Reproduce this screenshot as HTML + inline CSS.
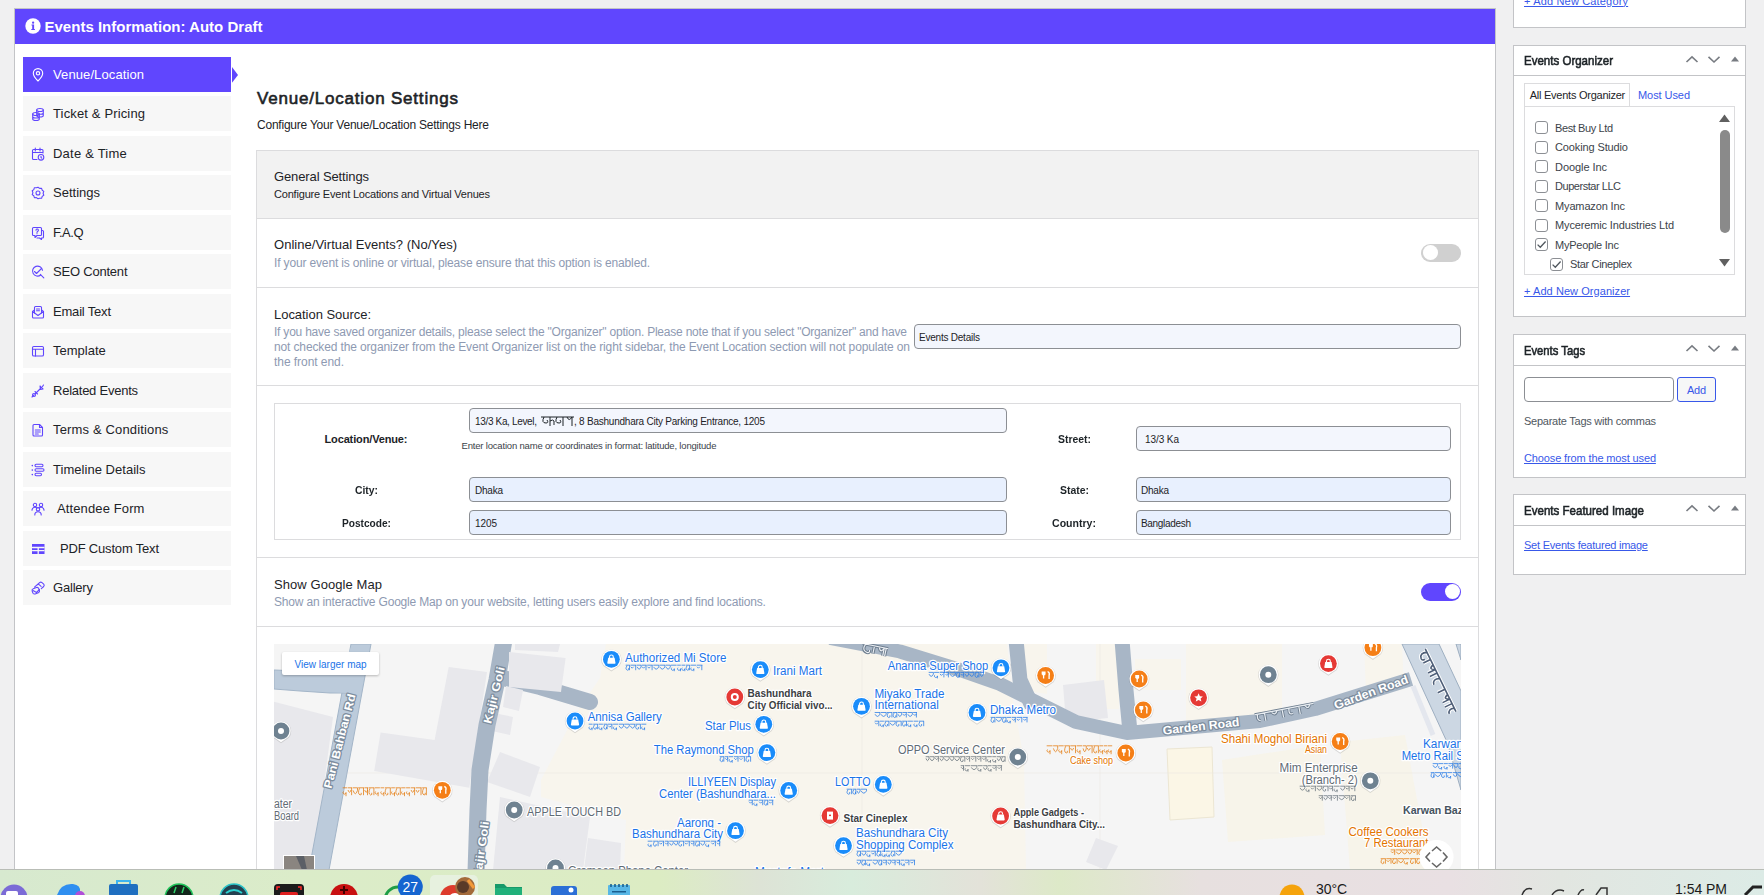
<!DOCTYPE html><html><head><meta charset="utf-8"><style>
html,body{margin:0;padding:0;}
body{width:1764px;height:895px;overflow:hidden;position:relative;background:#f0f0f1;font-family:"Liberation Sans",sans-serif;}
.t{position:absolute;white-space:nowrap;}
svg{position:absolute;overflow:visible;}
</style></head><body>
<div style="position:absolute;left:14px;top:8px;width:1482px;height:880px;background:#fff;border:1px solid #c3c4c7;box-sizing:border-box;"></div>
<div style="position:absolute;left:15px;top:9px;width:1480px;height:35px;background:#6046fe;"></div>
<svg style="left:24.7px;top:18.3px" width="16" height="16" viewBox="0 0 16 16"><circle cx="8" cy="8" r="7.7" fill="#fff"/><circle cx="8.1" cy="4.7" r="1.15" fill="#6046fe"/><path d="M6.5 6.6H9.1V10.9H9.9V12H6.3V10.9H7.2V7.6H6.5z" fill="#6046fe"/></svg>
<div class="t" style="left:44.50px;top:18.20px;font-size:15.00px;line-height:18.00px;color:#fff;font-weight:bold;letter-spacing:0.007px;">Events Information: Auto Draft</div>
<div style="position:absolute;left:23px;top:57.0px;width:208px;height:34.8px;background:#6046fe;"></div>
<div class="t" style="left:53.00px;top:66.90px;font-size:13.00px;line-height:15.60px;color:#fff;letter-spacing:0.105px;">Venue/Location</div>
<svg style="left:31px;top:67.75px" width="14" height="14" viewBox="0 0 14 14" fill="none" stroke="#fff" stroke-width="1.1" stroke-linecap="round" stroke-linejoin="round"><path d="M7 13 C3.5 9.5 2.3 7.5 2.3 5.3 A4.7 4.7 0 0 1 11.7 5.3 C11.7 7.5 10.5 9.5 7 13z"/><circle cx="7" cy="5.3" r="1.7"/></svg>
<div style="position:absolute;left:23px;top:96.48px;width:208px;height:34.8px;background:#f7f7f7;"></div>
<div class="t" style="left:53.00px;top:106.38px;font-size:13.00px;line-height:15.60px;color:#1d2327;letter-spacing:0.145px;">Ticket &amp; Pricing</div>
<svg style="left:31px;top:107.23px" width="14" height="14" viewBox="0 0 14 14" fill="none" stroke="#6046fe" stroke-width="1.1" stroke-linecap="round" stroke-linejoin="round"><ellipse cx="9" cy="3" rx="3.3" ry="1.5"/><path d="M5.7 3v5.5c0 .8 1.5 1.5 3.3 1.5s3.3-.7 3.3-1.5V3M5.7 5.8c0 .8 1.5 1.5 3.3 1.5s3.3-.7 3.3-1.5"/><ellipse cx="5" cy="7" rx="3.3" ry="1.5"/><path d="M1.7 7v5c0 .8 1.5 1.5 3.3 1.5s3.3-.7 3.3-1.5V7M1.7 9.5c0 .8 1.5 1.5 3.3 1.5s3.3-.7 3.3-1.5"/></svg>
<div style="position:absolute;left:23px;top:135.96px;width:208px;height:34.8px;background:#f7f7f7;"></div>
<div class="t" style="left:53.00px;top:145.86px;font-size:13.00px;line-height:15.60px;color:#1d2327;letter-spacing:0.217px;">Date &amp; Time</div>
<svg style="left:31px;top:146.71px" width="14" height="14" viewBox="0 0 14 14" fill="none" stroke="#6046fe" stroke-width="1.1" stroke-linecap="round" stroke-linejoin="round"><path d="M6 12.5H2.5a1 1 0 0 1-1-1V3.5a1 1 0 0 1 1-1h8.5a1 1 0 0 1 1 1V6M1.5 5.5h10.5M4.3 1v3M9 1v3"/><circle cx="10" cy="10.3" r="2.8"/><path d="M10 9.3v1.2l.8.6"/></svg>
<div style="position:absolute;left:23px;top:175.44px;width:208px;height:34.8px;background:#f7f7f7;"></div>
<div class="t" style="left:53.00px;top:185.34px;font-size:13.00px;line-height:15.60px;color:#1d2327;letter-spacing:0.004px;">Settings</div>
<svg style="left:31px;top:186.19px" width="14" height="14" viewBox="0 0 14 14" fill="none" stroke="#6046fe" stroke-width="1.1" stroke-linecap="round" stroke-linejoin="round"><path d="M7 1.2l1.6 1.2 2-.1.6 1.9 1.6 1.2-.7 1.9.7 1.9-1.6 1.2-.6 1.9-2-.1L7 12.8l-1.6-1.2-2 .1-.6-1.9L1.2 8.6l.7-1.9-.7-1.9 1.6-1.2.6-1.9 2 .1z"/><circle cx="7" cy="7" r="2"/></svg>
<div style="position:absolute;left:23px;top:214.92px;width:208px;height:34.8px;background:#f7f7f7;"></div>
<div class="t" style="left:53.00px;top:224.82px;font-size:13.00px;line-height:15.60px;color:#1d2327;letter-spacing:-0.502px;">F.A.Q</div>
<svg style="left:31px;top:225.67px" width="14" height="14" viewBox="0 0 14 14" fill="none" stroke="#6046fe" stroke-width="1.1" stroke-linecap="round" stroke-linejoin="round"><path d="M2.5 1.5h7a1 1 0 0 1 1 1v6a1 1 0 0 1-1 1H6L4 11.5v-2H2.5a1 1 0 0 1-1-1v-6a1 1 0 0 1 1-1z"/><path d="M10.5 4.5h1a1 1 0 0 1 1 1V11a1 1 0 0 1-1 1h-1v1.5L8.5 12H6"/><path d="M5 4.3a1.2 1.2 0 1 1 1.8 1c-.5.3-.8.6-.8 1.1M6 7.6v.1"/></svg>
<div style="position:absolute;left:23px;top:254.4px;width:208px;height:34.8px;background:#f7f7f7;"></div>
<div class="t" style="left:53.00px;top:264.30px;font-size:13.00px;line-height:15.60px;color:#1d2327;letter-spacing:-0.210px;">SEO Content</div>
<svg style="left:31px;top:265.15px" width="14" height="14" viewBox="0 0 14 14" fill="none" stroke="#6046fe" stroke-width="1.1" stroke-linecap="round" stroke-linejoin="round"><path d="M11.5 5.3A5 5 0 1 0 9.7 10"/><path d="M3.5 6.5l2 2 5-5"/><path d="M9.3 9.3l3.5 3.5"/></svg>
<div style="position:absolute;left:23px;top:293.88px;width:208px;height:34.8px;background:#f7f7f7;"></div>
<div class="t" style="left:53.00px;top:303.78px;font-size:13.00px;line-height:15.60px;color:#1d2327;letter-spacing:-0.192px;">Email Text</div>
<svg style="left:31px;top:304.63px" width="14" height="14" viewBox="0 0 14 14" fill="none" stroke="#6046fe" stroke-width="1.1" stroke-linecap="round" stroke-linejoin="round"><path d="M1.5 6.5l5.5 4 5.5-4v5.5a1 1 0 0 1-1 1h-9a1 1 0 0 1-1-1z"/><path d="M1.5 6.5l2-1.5M12.5 6.5l-2-1.5"/><path d="M3.5 8V2.5a1 1 0 0 1 1-1h5a1 1 0 0 1 1 1V8"/><path d="M5.5 4h3M5.5 5.8h3"/></svg>
<div style="position:absolute;left:23px;top:333.36px;width:208px;height:34.8px;background:#f7f7f7;"></div>
<div class="t" style="left:53.00px;top:343.26px;font-size:13.00px;line-height:15.60px;color:#1d2327;letter-spacing:0.007px;">Template</div>
<svg style="left:31px;top:344.11px" width="14" height="14" viewBox="0 0 14 14" fill="none" stroke="#6046fe" stroke-width="1.1" stroke-linecap="round" stroke-linejoin="round"><rect x="1.5" y="2.5" width="11" height="9.5" rx="1.3"/><path d="M1.5 5.3h11M4.5 5.3V12"/></svg>
<div style="position:absolute;left:23px;top:372.84px;width:208px;height:34.8px;background:#f7f7f7;"></div>
<div class="t" style="left:53.00px;top:382.74px;font-size:13.00px;line-height:15.60px;color:#1d2327;letter-spacing:-0.243px;">Related Events</div>
<svg style="left:31px;top:383.59px" width="14" height="14" viewBox="0 0 14 14" fill="none" stroke="#6046fe" stroke-width="1.1" stroke-linecap="round" stroke-linejoin="round"><circle cx="3" cy="11" r="1.5"/><path d="M1 13l2.2-2.2M4.5 9.5l5-5M9 2l3 3-2.5.5z M12.5 1l-1 1.5"/><path d="M4 7.5l2.5 2.5"/></svg>
<div style="position:absolute;left:23px;top:412.32px;width:208px;height:34.8px;background:#f7f7f7;"></div>
<div class="t" style="left:53.00px;top:422.22px;font-size:13.00px;line-height:15.60px;color:#1d2327;letter-spacing:0.152px;">Terms &amp; Conditions</div>
<svg style="left:31px;top:423.07px" width="14" height="14" viewBox="0 0 14 14" fill="none" stroke="#6046fe" stroke-width="1.1" stroke-linecap="round" stroke-linejoin="round"><path d="M3 1.5h5.5l3 3V12a1 1 0 0 1-1 1H3a1 1 0 0 1-1-1V2.5a1 1 0 0 1 1-1z"/><path d="M8.5 1.5v3h3M4.3 7h5M4.3 9h5M4.3 11h3"/></svg>
<div style="position:absolute;left:23px;top:451.8px;width:208px;height:34.8px;background:#f7f7f7;"></div>
<div class="t" style="left:53.00px;top:461.70px;font-size:13.00px;line-height:15.60px;color:#1d2327;letter-spacing:0.034px;">Timeline Details</div>
<svg style="left:31px;top:462.55px" width="14" height="14" viewBox="0 0 14 14" fill="none" stroke="#6046fe" stroke-width="1.1" stroke-linecap="round" stroke-linejoin="round"><path d="M1.3 2.5v.1M1.3 7v.1M1.3 11.5v.1" stroke-width="1.6"/><rect x="4" y="1.3" width="8" height="2.4" rx="1.2"/><rect x="4" y="5.8" width="9" height="2.4" rx="1.2"/><rect x="4" y="10.3" width="6.5" height="2.4" rx="1.2"/></svg>
<div style="position:absolute;left:23px;top:491.28px;width:208px;height:34.8px;background:#f7f7f7;"></div>
<div class="t" style="left:57.00px;top:501.18px;font-size:13.00px;line-height:15.60px;color:#1d2327;letter-spacing:0.118px;">Attendee Form</div>
<svg style="left:31px;top:502.03px" width="14" height="14" viewBox="0 0 14 14" fill="none" stroke="#6046fe" stroke-width="1.1" stroke-linecap="round" stroke-linejoin="round"><circle cx="4" cy="3" r="1.7"/><circle cx="10" cy="3" r="1.7"/><circle cx="7" cy="7.3" r="1.7"/><path d="M1 8.3a3 3 0 0 1 5-2.3M13 8.3a3 3 0 0 0-5-2.3M3.8 13a3.2 3.2 0 0 1 6.4 0"/></svg>
<div style="position:absolute;left:23px;top:530.76px;width:208px;height:34.8px;background:#f7f7f7;"></div>
<div class="t" style="left:60.00px;top:540.66px;font-size:13.00px;line-height:15.60px;color:#1d2327;letter-spacing:-0.187px;">PDF Custom Text</div>
<svg style="left:31px;top:541.51px" width="14" height="14" viewBox="0 0 14 14" fill="none" stroke="#6046fe" stroke-width="1.1" stroke-linecap="round" stroke-linejoin="round"><rect x="1" y="2" width="12.5" height="10" fill="#6046fe" stroke="none"/><path d="M1.5 5.5h11.5M1.5 8.6h11.5M7.2 5.5v6" stroke="#f6f7f7" stroke-width="1.3"/></svg>
<div style="position:absolute;left:23px;top:570.24px;width:208px;height:34.8px;background:#f7f7f7;"></div>
<div class="t" style="left:53.00px;top:580.14px;font-size:13.00px;line-height:15.60px;color:#1d2327;letter-spacing:-0.196px;">Gallery</div>
<svg style="left:31px;top:580.99px" width="14" height="14" viewBox="0 0 14 14" fill="none" stroke="#6046fe" stroke-width="1.1" stroke-linecap="round" stroke-linejoin="round"><rect x="1.3" y="7" width="7" height="5.5" rx="1.8" transform="rotate(-20 4.8 9.8)"/><path d="M3.5 6.2l2.5-2.4a1.8 1.8 0 0 1 2.4 0l1.7 1.5M6 4l2.6-2.4a1.8 1.8 0 0 1 2.4 0l1.7 1.5a1.8 1.8 0 0 1 0 2.4L10.3 7.7"/><path d="M2 9.5l3.5 2 3-3"/></svg>
<svg style="left:232px;top:67px" width="8" height="16"><path d="M0 0L6 7.9L0 15.8z" fill="#6046fe"/></svg>
<div class="t" style="left:257.00px;top:88.51px;font-size:17.00px;line-height:20.40px;color:#1d2327;-webkit-text-stroke:0.6px #1d2327;letter-spacing:0.801px;">Venue/Location Settings</div>
<div class="t" style="left:257.00px;top:118.34px;font-size:12.00px;line-height:14.40px;color:#1d2327;letter-spacing:-0.227px;">Configure Your Venue/Location Settings Here</div>
<div style="position:absolute;left:256px;top:150px;width:1223px;height:720px;border:1px solid #dcdcde;border-bottom:none;box-sizing:border-box;background:#fff;"></div>
<div style="position:absolute;left:257px;top:151px;width:1221px;height:67px;background:#f2f2f2;"></div>
<div style="position:absolute;left:257px;top:218px;width:1221px;height:1px;background:#dcdcde;"></div>
<div style="position:absolute;left:257px;top:287px;width:1221px;height:1px;background:#dcdcde;"></div>
<div style="position:absolute;left:257px;top:385px;width:1221px;height:1px;background:#dcdcde;"></div>
<div style="position:absolute;left:257px;top:557px;width:1221px;height:1px;background:#dcdcde;"></div>
<div style="position:absolute;left:257px;top:626px;width:1221px;height:1px;background:#dcdcde;"></div>
<div class="t" style="left:274.00px;top:169.00px;font-size:13.00px;line-height:15.60px;color:#1d2327;letter-spacing:-0.122px;">General Settings</div>
<div class="t" style="left:274.00px;top:187.89px;font-size:11.00px;line-height:13.20px;color:#1d2327;letter-spacing:-0.191px;">Configure Event Locations and Virtual Venues</div>
<div class="t" style="left:274.00px;top:237.00px;font-size:13.00px;line-height:15.60px;color:#1d2327;letter-spacing:0.030px;">Online/Virtual Events? (No/Yes)</div>
<div class="t" style="left:274.00px;top:255.64px;font-size:12.00px;line-height:14.40px;color:#8e9ab2;letter-spacing:-0.150px;">If your event is online or virtual, please ensure that this option is enabled.</div>
<div style="position:absolute;left:1421px;top:244px;width:40px;height:18px;background:#d0d0d0;border-radius:9px;"></div>
<div style="position:absolute;left:1422.5px;top:244.7px;width:15.5px;height:15.5px;background:#fff;border-radius:50%;"></div>
<div class="t" style="left:274.00px;top:306.80px;font-size:13.00px;line-height:15.60px;color:#1d2327;letter-spacing:-0.038px;">Location Source:</div>
<div class="t" style="left:274.00px;top:325.14px;font-size:12.00px;line-height:14.40px;color:#8e9ab2;letter-spacing:-0.217px;">If you have saved organizer details, please select the &quot;Organizer&quot; option. Please note that if you select &quot;Organizer&quot; and have</div>
<div class="t" style="left:274.00px;top:340.24px;font-size:12.00px;line-height:14.40px;color:#8e9ab2;letter-spacing:-0.132px;">not checked the organizer from the Event Organizer list on the right sidebar, the Event Location section will not populate on</div>
<div class="t" style="left:274.00px;top:354.64px;font-size:12.00px;line-height:14.40px;color:#8e9ab2;letter-spacing:-0.055px;">the front end.</div>
<div style="position:absolute;left:914px;top:324px;width:547px;height:25px;background:#f3f6fd;border:1px solid #8c8f94;border-radius:4px;box-sizing:border-box;"></div>
<div class="t" style="left:919.00px;top:331.63px;font-size:10.00px;line-height:12.00px;color:#1d2327;letter-spacing:-0.224px;">Events Details</div>
<div style="position:absolute;left:274px;top:403px;width:1187px;height:137px;border:1px solid #dcdcde;box-sizing:border-box;"></div>
<div style="position:absolute;left:469px;top:408px;width:538px;height:25px;background:#f3f6fd;border:1px solid #8c8f94;border-radius:4px;box-sizing:border-box;"></div>
<div class="t" style="left:475.00px;top:415.63px;font-size:10.00px;line-height:12.00px;color:#1d2327;letter-spacing:-0.337px;">13/3 Ka, Level,</div>
<svg style="left:541px;top:416px" width="34" height="12"><path d="M0 1H33" stroke="#1d2327" stroke-width="1"/><path d="M3 1 q-3 6 2 6 q3 0 1 -3 M9 1 v9 M9 5 q3 -2 4 0 v4 M16 1 q-3 6 2 6 q3 0 1 -3 M22 1 v9 M26 1 q2 5 5 0 v9" stroke="#1d2327" stroke-width="1" fill="none"/></svg>
<div class="t" style="left:574.00px;top:416.33px;font-size:10.00px;line-height:12.00px;color:#1d2327;letter-spacing:-0.231px;">, 8 Bashundhara City Parking Entrance, 1205</div>
<div class="t" style="left:461.50px;top:439.61px;font-size:9.50px;line-height:11.40px;color:#3c434a;letter-spacing:-0.183px;">Enter location name or coordinates in format: latitude, longitude</div>
<div style="position:absolute;left:469px;top:477px;width:538px;height:25px;background:#e8f0fe;border:1px solid #8c8f94;border-radius:4px;box-sizing:border-box;"></div>
<div class="t" style="left:475.00px;top:484.63px;font-size:10.00px;line-height:12.00px;color:#1d2327;letter-spacing:-0.227px;">Dhaka</div>
<div style="position:absolute;left:469px;top:510px;width:538px;height:25px;background:#e8f0fe;border:1px solid #8c8f94;border-radius:4px;box-sizing:border-box;"></div>
<div class="t" style="left:475.00px;top:517.64px;font-size:10.00px;line-height:12.00px;color:#1d2327;letter-spacing:-0.082px;">1205</div>
<div style="position:absolute;left:1136px;top:426px;width:315px;height:25px;background:#f3f6fd;border:1px solid #8c8f94;border-radius:4px;box-sizing:border-box;"></div>
<div class="t" style="left:1145.00px;top:433.63px;font-size:10.00px;line-height:12.00px;color:#1d2327;letter-spacing:-0.079px;">13/3 Ka</div>
<div style="position:absolute;left:1136px;top:477px;width:315px;height:25px;background:#e8f0fe;border:1px solid #8c8f94;border-radius:4px;box-sizing:border-box;"></div>
<div class="t" style="left:1141.00px;top:484.63px;font-size:10.00px;line-height:12.00px;color:#1d2327;letter-spacing:-0.227px;">Dhaka</div>
<div style="position:absolute;left:1136px;top:510px;width:315px;height:25px;background:#e8f0fe;border:1px solid #8c8f94;border-radius:4px;box-sizing:border-box;"></div>
<div class="t" style="left:1141.00px;top:517.64px;font-size:10.00px;line-height:12.00px;color:#1d2327;letter-spacing:-0.314px;">Bangladesh</div>
<div class="t" style="left:324.50px;top:433.19px;font-size:11.00px;line-height:13.20px;color:#1d2327;font-weight:bold;letter-spacing:-0.140px;">Location/Venue:</div>
<div class="t" style="left:354.50px;top:484.39px;font-size:11.00px;line-height:13.20px;color:#1d2327;font-weight:bold;transform:scaleX(0.9409);transform-origin:0 0;">City:</div>
<div class="t" style="left:341.50px;top:516.99px;font-size:11.00px;line-height:13.20px;color:#1d2327;font-weight:bold;transform:scaleX(0.9215);transform-origin:0 0;">Postcode:</div>
<div class="t" style="left:1057.50px;top:433.19px;font-size:11.00px;line-height:13.20px;color:#1d2327;font-weight:bold;transform:scaleX(0.9471);transform-origin:0 0;">Street:</div>
<div class="t" style="left:1059.50px;top:484.19px;font-size:11.00px;line-height:13.20px;color:#1d2327;font-weight:bold;transform:scaleX(0.9488);transform-origin:0 0;">State:</div>
<div class="t" style="left:1052.00px;top:516.89px;font-size:11.00px;line-height:13.20px;color:#1d2327;font-weight:bold;transform:scaleX(0.9601);transform-origin:0 0;">Country:</div>
<div class="t" style="left:274.00px;top:576.80px;font-size:13.00px;line-height:15.60px;color:#1d2327;letter-spacing:0.075px;">Show Google Map</div>
<div class="t" style="left:274.00px;top:595.14px;font-size:12.00px;line-height:14.40px;color:#8e9ab2;letter-spacing:-0.179px;">Show an interactive Google Map on your website, letting users easily explore and find locations.</div>
<div style="position:absolute;left:1421px;top:583px;width:40px;height:18px;background:#6046fe;border-radius:9px;"></div>
<div style="position:absolute;left:1444.5px;top:584px;width:15px;height:15px;background:#fff;border-radius:50%;"></div>
<svg style="left:274px;top:644px" width="1187" height="226" viewBox="274 644 1187 226" font-family="Liberation Sans, sans-serif">
<defs><clipPath id="mc"><rect x="274" y="644" width="1187" height="226"/></clipPath></defs>
<g clip-path="url(#mc)">
<rect x="274" y="644" width="1187" height="226" fill="#f5f5f5"/>
<polygon points="606.0,644.0 1007.0,644.0 1013.0,700.0 1024.0,760.0 1026.0,870.0 624.0,870.0 626.0,820.0 541.0,797.0 541.0,780.0 575.0,715.0 600.0,678.0" fill="#f8f5ed" />
<polygon points="1186.0,644.0 1282.0,644.0 1282.0,712.0 1186.0,722.0" fill="#f8f5ed" />
<polygon points="1364.0,644.0 1402.0,644.0 1404.0,690.0 1366.0,692.0" fill="#f8f5ed" />
<polygon points="1221.0,644.0 1282.0,644.0 1282.0,703.0 1221.0,708.0" fill="#f8f5ed" />
<polygon points="1022.0,644.0 1047.0,644.0 1047.0,694.0 1022.0,690.0" fill="#f8f5ed" />
<polygon points="1096.0,644.0 1119.0,644.0 1119.0,709.0 1096.0,709.0" fill="#f8f5ed" />
<polygon points="1135.0,659.0 1181.0,659.0 1181.0,690.0 1135.0,690.0" fill="#f8f5ed" />
<polygon points="1222.0,760.0 1320.0,745.0 1325.0,835.0 1228.0,842.0" fill="#f7f4ea" />
<polygon points="1340.0,742.0 1405.0,735.0 1430.0,869.0 1350.0,870.0" fill="#f7f4ea" />
<polygon points="1167.0,749.0 1212.0,747.0 1214.0,817.0 1170.0,820.0" fill="#fbf6e6" stroke="#ece6d3" stroke-width="1"/>
<path d="M862 644V870 M1100 644V870 M274 773H1460" stroke="#ebe8e2" stroke-width="0.6"/>
<polygon points="448.7,667.0 487.0,672.0 469.3,787.7 374.2,771.0 380.6,732.5 434.6,740.0" fill="#e8e8ec" />
<polygon points="274.0,701.7 333.0,717.0 312.5,870.0 274.0,870.0" fill="#e8e8ec" />
<polygon points="494.0,713.0 513.0,717.0 510.0,735.0 492.0,731.0" fill="#e8e8ec" />
<polygon points="500.0,752.0 540.0,767.0 530.0,797.0 487.0,782.0" fill="#e8e8ec" />
<polygon points="500.0,797.0 590.0,817.0 583.0,870.0 493.0,870.0" fill="#e8e8ec" />
<polygon points="588.0,838.0 621.0,843.0 620.0,870.0 584.0,870.0" fill="#e8e8ec" />
<polygon points="1063.0,685.0 1104.0,680.0 1108.0,718.0 1066.0,722.0" fill="#e8e8ec" />
<polygon points="1096.0,838.0 1118.0,846.0 1106.0,870.0 1086.0,862.0" fill="#e8e8ec" />
<polygon points="515.0,644.0 560.0,644.0 558.0,652.0 515.0,650.0" fill="#e8e8ec" />
<polygon points="351.0,644.0 371.0,644.0 329.0,870.0 309.0,870.0" fill="#bccbdb" stroke="#a3b5c8" stroke-width="1"/>
<polygon points="274.0,670.0 352.0,673.0 346.0,693.0 330.0,693.0 300.0,691.0 274.0,689.0" fill="#bccbdb" stroke="#a3b5c8" stroke-width="1"/>
<polygon points="352.0,645.0 370.0,645.0 347.0,693.0 331.0,692.0" fill="#bccbdb" />
<path d="M504.0 640.0 L497.0 680.0 L487.0 725.0 L480.0 770.0 L478.0 810.0 L476.0 872.0" stroke="#a8b6c6" stroke-width="17.0" fill="none" stroke-linejoin="round" stroke-linecap="butt"/>
<path d="M503 678 L540 687 L590 702" stroke="#a8b6c6" stroke-width="16" stroke-linecap="round" fill="none"/>
<path d="M830.0 638.0 L900.0 651.5 L960.0 670.0 L1000.0 684.0 L1076.0 722.0 L1127.0 733.0 L1260.0 721.0 L1315.0 709.0 L1411.0 679.0" stroke="#a8b6c6" stroke-width="14.0" fill="none" stroke-linejoin="round" stroke-linecap="butt"/>
<path d="M1016.0 640.0 L1020.0 680.0 L1032.0 706.0" stroke="#a8b6c6" stroke-width="15.0" fill="none" stroke-linejoin="round" stroke-linecap="butt"/>
<path d="M1122.0 640.0 L1126.0 690.0 L1130.0 732.0" stroke="#a8b6c6" stroke-width="15.0" fill="none" stroke-linejoin="round" stroke-linecap="butt"/>
<polygon points="1402.0,644.0 1439.0,644.0 1461.0,691.0 1461.0,790.0 1447.0,742.0" fill="#ccd7e3" stroke="#9eafc1" stroke-width="1"/>
<polygon points="1456.0,644.0 1461.0,644.0 1461.0,660.0" fill="#ccd7e3" stroke="#9eafc1" stroke-width="1"/>
<path d="M1413 686 L1433 735" stroke="#e4e7ee" stroke-width="5"/>
<polygon points="509.0,652.0 565.6,658.0 561.0,692.0 509.0,687.0" fill="#e8e8ec" />
<polygon points="506.0,686.0 523.0,690.0 519.0,711.0 503.0,707.0" fill="#e8e8ec" />
<text x="339.5" y="745.1" font-size="11.5" fill="#fff" text-anchor="middle" textLength="97.0" lengthAdjust="spacingAndGlyphs" font-weight="bold" stroke="#7d8d9e" stroke-width="2.5" paint-order="stroke" stroke-linejoin="round" transform="rotate(-75.5 339.5 741.0)">Pani Bahban Rd</text>
<text x="494.0" y="699.1" font-size="11.5" fill="#fff" text-anchor="middle" textLength="58.0" lengthAdjust="spacingAndGlyphs" font-weight="bold" stroke="#7d8d9e" stroke-width="2.5" paint-order="stroke" stroke-linejoin="round" transform="rotate(-76.0 494.0 695.0)">Kajir Goli</text>
<text x="481.0" y="854.1" font-size="11.5" fill="#fff" text-anchor="middle" textLength="58.0" lengthAdjust="spacingAndGlyphs" font-weight="bold" stroke="#7d8d9e" stroke-width="2.5" paint-order="stroke" stroke-linejoin="round" transform="rotate(-82.0 481.0 850.0)">Kajir Goli</text>
<text x="1201.0" y="730.3" font-size="12.0" fill="#fff" text-anchor="middle" textLength="77.0" lengthAdjust="spacingAndGlyphs" font-weight="bold" stroke="#7d8d9e" stroke-width="2.5" paint-order="stroke" stroke-linejoin="round" transform="rotate(-6.5 1201.0 726.0)">Garden Road</text>
<text x="1371.0" y="696.3" font-size="12.0" fill="#fff" text-anchor="middle" textLength="78.0" lengthAdjust="spacingAndGlyphs" font-weight="bold" stroke="#7d8d9e" stroke-width="2.5" paint-order="stroke" stroke-linejoin="round" transform="rotate(-20.0 1371.0 692.0)">Garden Road</text>
<g transform="rotate(-11 1285 714)"><path d="M1255 709 h60 M1258 709 q-2 6 2 7 M1265 709 v8 M1272 709 q3 6 6 0 M1283 709 v8 M1290 709 q-2 7 3 6 M1300 709 v8 M1306 709 q3 6 5 0" stroke="#6f7f90" stroke-width="3" fill="none"/><path d="M1255 709 h60 M1258 709 q-2 6 2 7 M1265 709 v8 M1272 709 q3 6 6 0 M1283 709 v8 M1290 709 q-2 7 3 6 M1300 709 v8 M1306 709 q3 6 5 0" stroke="#e8edf2" stroke-width="1.2" fill="none"/></g>
<g transform="rotate(12 870 648)"><path d="M862 645 h26 M865 645 q-3 7 3 8 q3 0 2 -3 M874 645 v8 M879 645 q2 7 5 0 v8 M886 645 v8" stroke="#6f7f90" stroke-width="3.2" fill="none"/><path d="M862 645 h26 M865 645 q-3 7 3 8 q3 0 2 -3 M874 645 v8 M879 645 q2 7 5 0 v8 M886 645 v8" stroke="#eef1f5" stroke-width="1.1" fill="none"/></g>
<g transform="translate(7 -8) rotate(64 1430 690)"><path d="M1395 686 h70 M1399 686 q-3 7 3 8 q3 0 2 -3 M1407 686 v8 M1413 686 q2 7 5 0 v8 M1422 686 v8 M1428 686 q-3 7 3 8 M1440 686 v8 M1446 686 q2 7 5 0 v8 M1456 686 v8 M1461 686 q-2 6 3 7" stroke="#fff" stroke-width="3.6" fill="none"/><path d="M1395 686 h70 M1399 686 q-3 7 3 8 q3 0 2 -3 M1407 686 v8 M1413 686 q2 7 5 0 v8 M1422 686 v8 M1428 686 q-3 7 3 8 M1440 686 v8 M1446 686 q2 7 5 0 v8 M1456 686 v8 M1461 686 q-2 6 3 7" stroke="#4f5f78" stroke-width="1.6" fill="none"/></g>
<text x="625.0" y="661.8" font-size="12.0" fill="#1a73e8" text-anchor="start" textLength="101.5" lengthAdjust="spacingAndGlyphs" stroke="#fff" stroke-width="2.5" paint-order="stroke" stroke-linejoin="round">Authorized Mi Store</text>
<path d="M627.0 665.7 q-2.2 3.5 0.5 4.5 q2 0 1.2 -2.2 M629.5 665.2 v5.0 M625.7 665.2 h4.1 M635.7 665.2 v5.0 M630.7 666.7 q1.5 3.0 3 0 M630.4 665.2 h5.9 M637.2 666.9 q1.9 4.5 3.9 0 v-1.7 M636.9 665.2 h4.3 M646.0 665.2 v5.0 M642.0 666.7 q1.5 3.0 3 0 M641.7 665.2 h4.9 M652.1 665.2 v5.0 M647.5 666.7 q1.5 3.0 3 0 M647.2 665.2 h5.5 M653.6 666.9 q2.6 4.5 5.2 0 v-1.7 M653.3 665.2 h5.6 M659.8 666.9 q2.5 4.5 5.1 0 v-1.7 M659.5 665.2 h5.5 M665.9 666.9 q2.2 4.5 4.4 0 v-1.7 M665.6 665.2 h4.8 M671.8 667.7 a1.5 1.5 0 1 0 2.5 1 v2.5 M671.0 665.2 h5.6 M678.0 667.7 a1.5 1.5 0 1 0 2.5 1 v2.5 M677.2 665.2 h3.6 M682.3 667.7 a1.5 1.5 0 1 0 2.5 1 v2.5 M681.5 665.2 h3.7 M687.1 665.7 q-2.2 3.5 0.5 4.5 q2 0 1.2 -2.2 M689.6 665.2 v5.0 M685.8 665.2 h4.1 M691.3 667.7 a1.5 1.5 0 1 0 2.5 1 v2.5 M690.5 665.2 h5.5 M701.8 665.2 v5.0 M696.9 666.7 q1.5 3.0 3 0 M696.6 665.2 h5.8 " stroke="#1a73e8" stroke-width="0.85" fill="none" opacity="0.85"/>
<text x="773.0" y="675.1" font-size="12.0" fill="#1a73e8" text-anchor="start" textLength="49.0" lengthAdjust="spacingAndGlyphs" stroke="#fff" stroke-width="2.5" paint-order="stroke" stroke-linejoin="round">Irani Mart</text>
<text x="747.6" y="697.3" font-size="11.5" fill="#3c4043" text-anchor="start" textLength="64.0" lengthAdjust="spacingAndGlyphs" font-weight="bold" stroke="#fff" stroke-width="2.5" paint-order="stroke" stroke-linejoin="round">Bashundhara</text>
<text x="747.6" y="709.1" font-size="11.5" fill="#3c4043" text-anchor="start" textLength="85.0" lengthAdjust="spacingAndGlyphs" font-weight="bold" stroke="#fff" stroke-width="2.5" paint-order="stroke" stroke-linejoin="round">City Official vivo...</text>
<text x="587.7" y="721.3" font-size="12.0" fill="#1a73e8" text-anchor="start" textLength="74.0" lengthAdjust="spacingAndGlyphs" stroke="#fff" stroke-width="2.5" paint-order="stroke" stroke-linejoin="round">Annisa Gallery</text>
<path d="M589.5 726.7 a1.5 1.5 0 1 0 2.5 1 v2.5 M588.7 724.2 h3.9 M594.5 724.7 q-2.2 3.5 0.5 4.5 q2 0 1.2 -2.2 M597.6 724.2 v5.0 M593.2 724.2 h4.7 M599.3 726.7 a1.5 1.5 0 1 0 2.5 1 v2.5 M598.5 724.2 h4.4 M604.8 724.7 q-2.2 3.5 0.5 4.5 q2 0 1.2 -2.2 M607.1 724.2 v5.0 M603.5 724.2 h3.9 M611.9 724.2 v5.0 M608.3 725.7 q1.5 3.0 3 0 M608.0 724.2 h4.5 M613.9 726.7 a1.5 1.5 0 1 0 2.5 1 v2.5 M613.1 724.2 h5.1 M619.1 725.9 q2.2 4.5 4.4 0 v-1.7 M618.8 724.2 h4.8 M624.5 725.9 q2.4 4.5 4.8 0 v-1.7 M624.2 724.2 h5.2 M630.4 725.9 q2.2 4.5 4.3 0 v-1.7 M630.1 724.2 h4.7 M636.7 724.7 q-2.2 3.5 0.5 4.5 q2 0 1.2 -2.2 M640.4 724.2 v5.0 M635.4 724.2 h5.2 M642.1 726.7 a1.5 1.5 0 1 0 2.5 1 v2.5 M641.3 724.2 h5.0 " stroke="#1a73e8" stroke-width="0.85" fill="none" opacity="0.85"/>
<text x="705.0" y="730.3" font-size="12.0" fill="#1a73e8" text-anchor="start" textLength="46.0" lengthAdjust="spacingAndGlyphs" stroke="#fff" stroke-width="2.5" paint-order="stroke" stroke-linejoin="round">Star Plus</text>
<text x="653.8" y="754.3" font-size="12.0" fill="#1a73e8" text-anchor="start" textLength="100.0" lengthAdjust="spacingAndGlyphs" stroke="#fff" stroke-width="2.5" paint-order="stroke" stroke-linejoin="round">The Raymond Shop</text>
<path d="M721.0 757.2 q-2.2 3.5 0.5 4.5 q2 0 1.2 -2.2 M723.8 756.7 v5.0 M719.7 756.7 h4.4 M727.7 756.7 v5.0 M725.0 758.2 q1.5 3.0 3 0 M724.7 756.7 h3.7 M729.7 759.2 a1.5 1.5 0 1 0 2.5 1 v2.5 M728.9 756.7 h4.3 M738.0 756.7 v5.0 M734.2 758.2 q1.5 3.0 3 0 M733.9 756.7 h4.8 M744.4 756.7 v5.0 M739.5 758.2 q1.5 3.0 3 0 M739.2 756.7 h5.7 M746.9 757.2 q-2.2 3.5 0.5 4.5 q2 0 1.2 -2.2 M750.6 756.7 v5.0 M745.6 756.7 h5.3 " stroke="#1a73e8" stroke-width="0.85" fill="none" opacity="0.85"/>
<text x="688.0" y="785.7" font-size="12.0" fill="#1a73e8" text-anchor="start" textLength="88.0" lengthAdjust="spacingAndGlyphs" stroke="#fff" stroke-width="2.5" paint-order="stroke" stroke-linejoin="round">ILLIYEEN Display</text>
<text x="659.0" y="797.8" font-size="12.0" fill="#1a73e8" text-anchor="start" textLength="117.0" lengthAdjust="spacingAndGlyphs" stroke="#fff" stroke-width="2.5" paint-order="stroke" stroke-linejoin="round">Center (Bashundhara...</text>
<path d="M752.3 800.2 v5.0 M749.0 801.7 q1.5 3.0 3 0 M748.7 800.2 h4.2 M754.3 802.7 a1.5 1.5 0 1 0 2.5 1 v2.5 M753.5 800.2 h4.6 M762.7 800.2 v5.0 M759.1 801.7 q1.5 3.0 3 0 M758.8 800.2 h4.5 M765.2 800.7 q-2.2 3.5 0.5 4.5 q2 0 1.2 -2.2 M767.7 800.2 v5.0 M763.9 800.2 h4.1 M772.7 800.2 v5.0 M768.9 801.7 q1.5 3.0 3 0 M768.6 800.2 h4.7 " stroke="#1a73e8" stroke-width="0.85" fill="none" opacity="0.85"/>
<text x="835.0" y="786.3" font-size="12.0" fill="#1a73e8" text-anchor="start" textLength="35.5" lengthAdjust="spacingAndGlyphs" stroke="#fff" stroke-width="2.5" paint-order="stroke" stroke-linejoin="round">LOTTO</text>
<path d="M848.0 789.7 q-2.2 3.5 0.5 4.5 q2 0 1.2 -2.2 M851.6 789.2 v5.0 M846.7 789.2 h5.2 M853.8 789.7 q-2.2 3.5 0.5 4.5 q2 0 1.2 -2.2 M855.8 789.2 v5.0 M852.5 789.2 h3.6 M857.0 790.9 q1.5 4.5 3.1 0 v-1.7 M856.7 789.2 h3.5 M861.1 790.9 q2.7 4.5 5.4 0 v-1.7 M860.8 789.2 h5.8 " stroke="#1a73e8" stroke-width="0.85" fill="none" opacity="0.85"/>
<text x="843.5" y="821.5" font-size="11.5" fill="#3c4043" text-anchor="start" textLength="64.0" lengthAdjust="spacingAndGlyphs" font-weight="bold" stroke="#fff" stroke-width="2.5" paint-order="stroke" stroke-linejoin="round">Star Cineplex</text>
<text x="677.0" y="826.8" font-size="12.0" fill="#1a73e8" text-anchor="start" textLength="44.0" lengthAdjust="spacingAndGlyphs" stroke="#fff" stroke-width="2.5" paint-order="stroke" stroke-linejoin="round">Aarong -</text>
<text x="632.0" y="838.3" font-size="12.0" fill="#1a73e8" text-anchor="start" textLength="91.0" lengthAdjust="spacingAndGlyphs" stroke="#fff" stroke-width="2.5" paint-order="stroke" stroke-linejoin="round">Bashundhara City</text>
<path d="M648.5 843.7 a1.5 1.5 0 1 0 2.5 1 v2.5 M647.7 841.2 h4.8 M654.4 841.7 q-2.2 3.5 0.5 4.5 q2 0 1.2 -2.2 M658.1 841.2 v5.0 M653.1 841.2 h5.3 M663.5 841.2 v5.0 M659.3 842.7 q1.5 3.0 3 0 M659.0 841.2 h5.0 M668.0 841.2 v5.0 M665.0 842.7 q1.5 3.0 3 0 M664.7 841.2 h3.9 M669.5 842.9 q1.9 4.5 3.8 0 v-1.7 M669.2 841.2 h4.2 M674.3 842.9 q1.7 4.5 3.4 0 v-1.7 M674.0 841.2 h3.8 M679.7 841.7 q-2.2 3.5 0.5 4.5 q2 0 1.2 -2.2 M683.6 841.2 v5.0 M678.4 841.2 h5.6 M689.3 841.2 v5.0 M684.8 842.7 q1.5 3.0 3 0 M684.5 841.2 h5.4 M693.9 841.2 v5.0 M690.8 842.7 q1.5 3.0 3 0 M690.5 841.2 h4.0 M696.4 841.7 q-2.2 3.5 0.5 4.5 q2 0 1.2 -2.2 M699.4 841.2 v5.0 M695.1 841.2 h4.6 M700.6 842.9 q2.0 4.5 4.0 0 v-1.7 M700.3 841.2 h4.4 M706.1 843.7 a1.5 1.5 0 1 0 2.5 1 v2.5 M705.3 841.2 h5.1 M715.4 841.2 v5.0 M711.3 842.7 q1.5 3.0 3 0 M711.0 841.2 h5.0 M719.7 841.2 v5.0 M716.9 842.7 q1.5 3.0 3 0 M716.6 841.2 h3.7 " stroke="#1a73e8" stroke-width="0.85" fill="none" opacity="0.85"/>
<text x="856.0" y="837.1" font-size="12.0" fill="#1a73e8" text-anchor="start" textLength="92.0" lengthAdjust="spacingAndGlyphs" stroke="#fff" stroke-width="2.5" paint-order="stroke" stroke-linejoin="round">Bashundhara City</text>
<text x="856.0" y="849.3" font-size="12.0" fill="#1a73e8" text-anchor="start" textLength="97.5" lengthAdjust="spacingAndGlyphs" stroke="#fff" stroke-width="2.5" paint-order="stroke" stroke-linejoin="round">Shopping Complex</text>
<path d="M858.0 851.7 q-2.2 3.5 0.5 4.5 q2 0 1.2 -2.2 M860.5 851.2 v5.0 M856.7 851.2 h4.1 M861.7 852.9 q2.1 4.5 4.1 0 v-1.7 M861.4 851.2 h4.5 M867.3 853.7 a1.5 1.5 0 1 0 2.5 1 v2.5 M866.5 851.2 h4.0 M875.3 851.2 v5.0 M871.4 852.7 q1.5 3.0 3 0 M871.1 851.2 h4.7 M877.8 851.7 q-2.2 3.5 0.5 4.5 q2 0 1.2 -2.2 M880.7 851.2 v5.0 M876.5 851.2 h4.5 M882.4 853.7 a1.5 1.5 0 1 0 2.5 1 v2.5 M881.6 851.2 h3.7 M886.7 853.7 a1.5 1.5 0 1 0 2.5 1 v2.5 M885.9 851.2 h4.0 M891.9 851.7 q-2.2 3.5 0.5 4.5 q2 0 1.2 -2.2 M894.8 851.2 v5.0 M890.6 851.2 h4.5 M896.0 852.9 q2.7 4.5 5.3 0 v-1.7 M895.7 851.2 h5.7 " stroke="#1a73e8" stroke-width="0.85" fill="none" opacity="0.85"/>
<path d="M857.0 861.9 q1.8 4.5 3.6 0 v-1.7 M856.7 860.2 h4.0 M862.6 860.7 q-2.2 3.5 0.5 4.5 q2 0 1.2 -2.2 M865.4 860.2 v5.0 M861.3 860.2 h4.4 M867.1 862.7 a1.5 1.5 0 1 0 2.5 1 v2.5 M866.3 860.2 h5.7 M872.8 861.9 q2.3 4.5 4.6 0 v-1.7 M872.5 860.2 h5.0 M879.5 860.7 q-2.2 3.5 0.5 4.5 q2 0 1.2 -2.2 M881.7 860.2 v5.0 M878.2 860.2 h3.8 M886.3 860.2 v5.0 M882.9 861.7 q1.5 3.0 3 0 M882.6 860.2 h4.3 M887.8 861.9 q1.6 4.5 3.2 0 v-1.7 M887.5 860.2 h3.6 M895.1 860.2 v5.0 M892.0 861.7 q1.5 3.0 3 0 M891.7 860.2 h4.0 M899.6 860.2 v5.0 M896.6 861.7 q1.5 3.0 3 0 M896.3 860.2 h3.9 M901.6 862.7 a1.5 1.5 0 1 0 2.5 1 v2.5 M900.8 860.2 h3.5 M908.9 860.2 v5.0 M905.1 861.7 q1.5 3.0 3 0 M904.8 860.2 h4.7 M914.5 860.2 v5.0 M910.4 861.7 q1.5 3.0 3 0 M910.1 860.2 h5.0 " stroke="#1a73e8" stroke-width="0.85" fill="none" opacity="0.85"/>
<text x="874.4" y="697.8" font-size="12.0" fill="#1a73e8" text-anchor="start" textLength="70.0" lengthAdjust="spacingAndGlyphs" stroke="#fff" stroke-width="2.5" paint-order="stroke" stroke-linejoin="round">Miyako Trade</text>
<text x="874.4" y="709.3" font-size="12.0" fill="#1a73e8" text-anchor="start" textLength="64.5" lengthAdjust="spacingAndGlyphs" stroke="#fff" stroke-width="2.5" paint-order="stroke" stroke-linejoin="round">International</text>
<path d="M875.0 714.2 q2.5 4.5 4.9 0 v-1.7 M874.7 712.5 h5.3 M880.9 714.2 q2.7 4.5 5.3 0 v-1.7 M880.6 712.5 h5.7 M888.2 713.0 q-2.2 3.5 0.5 4.5 q2 0 1.2 -2.2 M891.9 712.5 v5.0 M886.9 712.5 h5.2 M894.1 713.0 q-2.2 3.5 0.5 4.5 q2 0 1.2 -2.2 M896.8 712.5 v5.0 M892.8 712.5 h4.4 M898.0 714.2 q1.8 4.5 3.7 0 v-1.7 M897.7 712.5 h4.1 M906.3 712.5 v5.0 M902.7 714.0 q1.5 3.0 3 0 M902.4 712.5 h4.5 M907.8 714.2 q2.3 4.5 4.6 0 v-1.7 M907.5 712.5 h5.0 M916.4 712.5 v5.0 M913.4 714.0 q1.5 3.0 3 0 M913.1 712.5 h3.9 " stroke="#1a73e8" stroke-width="0.85" fill="none" opacity="0.85"/>
<path d="M878.8 721.2 v5.0 M875.0 722.7 q1.5 3.0 3 0 M874.7 721.2 h4.7 M880.8 723.7 a1.5 1.5 0 1 0 2.5 1 v2.5 M880.0 721.2 h3.9 M885.8 721.7 q-2.2 3.5 0.5 4.5 q2 0 1.2 -2.2 M888.9 721.2 v5.0 M884.5 721.2 h4.7 M890.1 722.9 q2.5 4.5 5.1 0 v-1.7 M889.8 721.2 h5.5 M897.1 721.7 q-2.2 3.5 0.5 4.5 q2 0 1.2 -2.2 M901.2 721.2 v5.0 M895.8 721.2 h5.6 M903.4 721.7 q-2.2 3.5 0.5 4.5 q2 0 1.2 -2.2 M906.5 721.2 v5.0 M902.1 721.2 h4.8 M908.2 723.7 a1.5 1.5 0 1 0 2.5 1 v2.5 M907.4 721.2 h5.5 M914.4 723.7 a1.5 1.5 0 1 0 2.5 1 v2.5 M913.6 721.2 h4.4 M919.9 721.7 q-2.2 3.5 0.5 4.5 q2 0 1.2 -2.2 M923.7 721.2 v5.0 M918.6 721.2 h5.4 " stroke="#1a73e8" stroke-width="0.85" fill="none" opacity="0.85"/>
<text x="887.7" y="670.0" font-size="12.0" fill="#1a73e8" text-anchor="start" textLength="100.5" lengthAdjust="spacingAndGlyphs" stroke="#fff" stroke-width="2.5" paint-order="stroke" stroke-linejoin="round">Ananna Super Shop</text>
<path d="M929.0 674.1 q2.2 4.5 4.4 0 v-1.7 M928.7 672.4 h4.8 M934.9 674.9 a1.5 1.5 0 1 0 2.5 1 v2.5 M934.1 672.4 h4.9 M943.9 672.4 v5.0 M939.9 673.9 q1.5 3.0 3 0 M939.6 672.4 h4.9 M948.4 672.4 v5.0 M945.4 673.9 q1.5 3.0 3 0 M945.1 672.4 h3.8 M949.9 674.1 q2.7 4.5 5.5 0 v-1.7 M949.6 672.4 h5.9 M957.3 672.9 q-2.2 3.5 0.5 4.5 q2 0 1.2 -2.2 M959.4 672.4 v5.0 M956.0 672.4 h3.6 M963.7 672.4 v5.0 M960.6 673.9 q1.5 3.0 3 0 M960.3 672.4 h4.0 M965.2 674.1 q1.7 4.5 3.5 0 v-1.7 M964.9 672.4 h3.9 M969.6 674.1 q2.2 4.5 4.3 0 v-1.7 M969.3 672.4 h4.7 M976.0 672.9 q-2.2 3.5 0.5 4.5 q2 0 1.2 -2.2 M978.9 672.4 v5.0 M974.7 672.4 h4.6 M980.1 674.1 q1.6 4.5 3.3 0 v-1.7 M979.8 672.4 h3.7 " stroke="#1a73e8" stroke-width="0.85" fill="none" opacity="0.85"/>
<text x="898.0" y="754.1" font-size="12.0" fill="#5f6b75" text-anchor="start" textLength="107.0" lengthAdjust="spacingAndGlyphs" stroke="#fff" stroke-width="2.5" paint-order="stroke" stroke-linejoin="round">OPPO Service Center</text>
<path d="M926.0 758.4 q1.5 4.5 3.0 0 v-1.7 M925.7 756.7 h3.4 M930.0 758.4 q2.0 4.5 4.1 0 v-1.7 M929.7 756.7 h4.5 M938.4 756.7 v5.0 M935.1 758.2 q1.5 3.0 3 0 M934.8 756.7 h4.2 M939.9 758.4 q1.7 4.5 3.4 0 v-1.7 M939.6 756.7 h3.8 M944.3 758.4 q2.4 4.5 4.9 0 v-1.7 M944.0 756.7 h5.3 M950.2 758.4 q1.8 4.5 3.6 0 v-1.7 M949.9 756.7 h4.0 M954.7 758.4 q2.3 4.5 4.6 0 v-1.7 M954.4 756.7 h5.0 M961.3 757.2 q-2.2 3.5 0.5 4.5 q2 0 1.2 -2.2 M964.8 756.7 v5.0 M960.0 756.7 h5.1 M969.6 756.7 v5.0 M966.0 758.2 q1.5 3.0 3 0 M965.7 756.7 h4.5 M975.8 756.7 v5.0 M971.1 758.2 q1.5 3.0 3 0 M970.8 756.7 h5.7 M980.9 756.7 v5.0 M977.3 758.2 q1.5 3.0 3 0 M977.0 756.7 h4.5 M986.0 756.7 v5.0 M982.4 758.2 q1.5 3.0 3 0 M982.1 756.7 h4.5 M988.0 759.2 a1.5 1.5 0 1 0 2.5 1 v2.5 M987.2 756.7 h4.6 M993.1 759.2 a1.5 1.5 0 1 0 2.5 1 v2.5 M992.3 756.7 h4.0 M997.2 758.4 q1.6 4.5 3.2 0 v-1.7 M996.9 756.7 h3.6 M1002.4 757.2 q-2.2 3.5 0.5 4.5 q2 0 1.2 -2.2 M1005.1 756.7 v5.0 M1001.1 756.7 h4.3 " stroke="#5f6b75" stroke-width="0.85" fill="none" opacity="0.85"/>
<path d="M963.5 765.7 v5.0 M961.0 767.2 q1.5 3.0 3 0 M960.7 765.7 h3.4 M965.5 768.2 a1.5 1.5 0 1 0 2.5 1 v2.5 M964.7 765.7 h5.7 M971.3 767.4 q2.7 4.5 5.5 0 v-1.7 M971.0 765.7 h5.9 M978.3 768.2 a1.5 1.5 0 1 0 2.5 1 v2.5 M977.5 765.7 h5.2 M983.5 767.4 q1.7 4.5 3.5 0 v-1.7 M983.2 765.7 h3.9 M988.5 768.2 a1.5 1.5 0 1 0 2.5 1 v2.5 M987.7 765.7 h3.9 M996.1 765.7 v5.0 M992.6 767.2 q1.5 3.0 3 0 M992.3 765.7 h4.4 M1001.4 765.7 v5.0 M997.6 767.2 q1.5 3.0 3 0 M997.3 765.7 h4.8 " stroke="#5f6b75" stroke-width="0.85" fill="none" opacity="0.85"/>
<text x="990.0" y="713.7" font-size="12.0" fill="#1a73e8" text-anchor="start" textLength="66.0" lengthAdjust="spacingAndGlyphs" stroke="#fff" stroke-width="2.5" paint-order="stroke" stroke-linejoin="round">Dhaka Metro</text>
<path d="M992.0 717.9 q-2.2 3.5 0.5 4.5 q2 0 1.2 -2.2 M994.9 717.4 v5.0 M990.7 717.4 h4.5 M996.1 719.1 q2.7 4.5 5.3 0 v-1.7 M995.8 717.4 h5.7 M1003.4 717.9 q-2.2 3.5 0.5 4.5 q2 0 1.2 -2.2 M1006.0 717.4 v5.0 M1002.1 717.4 h4.3 M1007.7 719.9 a1.5 1.5 0 1 0 2.5 1 v2.5 M1006.9 717.4 h4.4 M1015.3 717.4 v5.0 M1012.2 718.9 q1.5 3.0 3 0 M1011.9 717.4 h4.0 M1021.8 717.4 v5.0 M1016.8 718.9 q1.5 3.0 3 0 M1016.5 717.4 h5.8 M1027.0 717.4 v5.0 M1023.3 718.9 q1.5 3.0 3 0 M1023.0 717.4 h4.6 " stroke="#1a73e8" stroke-width="0.85" fill="none" opacity="0.85"/>
<path d="M1047.5 749.5 a1.5 1.5 0 1 0 2.5 1 v3.7 M1046.7 745.8 h5.8 M1053.4 748.4 q2.2 6.7 4.3 0 v-2.6 M1053.1 745.8 h4.7 M1059.2 749.5 a1.5 1.5 0 1 0 2.5 1 v3.7 M1058.4 745.8 h5.3 M1065.6 746.3 q-2.2 5.2 0.5 6.7 q2 0 1.2 -2.2 M1069.4 745.8 v7.4 M1064.3 745.8 h5.4 M1075.5 745.8 v7.4 M1070.6 748.0 q1.5 4.5 3 0 M1070.3 745.8 h5.8 M1077.5 749.5 a1.5 1.5 0 1 0 2.5 1 v3.7 M1076.7 745.8 h5.5 M1083.1 748.4 q1.6 6.7 3.2 0 v-2.6 M1082.8 745.8 h3.6 M1092.1 745.8 v7.4 M1087.3 748.0 q1.5 4.5 3 0 M1087.0 745.8 h5.7 M1094.6 746.3 q-2.2 5.2 0.5 6.7 q2 0 1.2 -2.2 M1098.4 745.8 v7.4 M1093.3 745.8 h5.4 M1100.1 749.5 a1.5 1.5 0 1 0 2.5 1 v3.7 M1099.3 745.8 h3.7 M1104.5 749.5 a1.5 1.5 0 1 0 2.5 1 v3.7 M1103.7 745.8 h3.6 M1108.6 749.5 a1.5 1.5 0 1 0 2.5 1 v3.7 M1107.8 745.8 h4.4 " stroke="#e37400" stroke-width="0.85" fill="none" opacity="0.85"/>
<text x="1070.0" y="763.9" font-size="10.0" fill="#e37400" text-anchor="start" textLength="43.0" lengthAdjust="spacingAndGlyphs" stroke="#fff" stroke-width="2.5" paint-order="stroke" stroke-linejoin="round">Cake shop</text>
<text x="1013.5" y="815.6" font-size="11.5" fill="#3c4043" text-anchor="start" textLength="70.5" lengthAdjust="spacingAndGlyphs" font-weight="bold" stroke="#fff" stroke-width="2.5" paint-order="stroke" stroke-linejoin="round">Apple Gadgets -</text>
<text x="1013.5" y="827.9" font-size="11.5" fill="#3c4043" text-anchor="start" textLength="91.5" lengthAdjust="spacingAndGlyphs" font-weight="bold" stroke="#fff" stroke-width="2.5" paint-order="stroke" stroke-linejoin="round">Bashundhara City...</text>
<text x="1221.0" y="743.3" font-size="12.0" fill="#e37400" text-anchor="start" textLength="106.0" lengthAdjust="spacingAndGlyphs" stroke="#fff" stroke-width="2.5" paint-order="stroke" stroke-linejoin="round">Shahi Moghol Biriani</text>
<text x="1305.0" y="753.3" font-size="10.0" fill="#e37400" text-anchor="start" textLength="22.0" lengthAdjust="spacingAndGlyphs" stroke="#fff" stroke-width="2.5" paint-order="stroke" stroke-linejoin="round">Asian</text>
<text x="1279.6" y="771.5" font-size="12.0" fill="#5f6b75" text-anchor="start" textLength="78.0" lengthAdjust="spacingAndGlyphs" stroke="#fff" stroke-width="2.5" paint-order="stroke" stroke-linejoin="round">Mim Enterprise</text>
<text x="1301.7" y="783.6" font-size="12.0" fill="#5f6b75" text-anchor="start" textLength="56.0" lengthAdjust="spacingAndGlyphs" stroke="#fff" stroke-width="2.5" paint-order="stroke" stroke-linejoin="round">(Branch- 2)</text>
<path d="M1300.0 787.9 q2.4 4.5 4.9 0 v-1.7 M1299.7 786.2 h5.3 M1306.4 788.7 a1.5 1.5 0 1 0 2.5 1 v2.5 M1305.6 786.2 h4.4 M1315.4 786.2 v5.0 M1310.9 787.7 q1.5 3.0 3 0 M1310.6 786.2 h5.4 M1316.9 787.9 q2.5 4.5 4.9 0 v-1.7 M1316.6 786.2 h5.3 M1323.8 786.7 q-2.2 3.5 0.5 4.5 q2 0 1.2 -2.2 M1328.0 786.2 v5.0 M1322.5 786.2 h5.8 M1332.6 786.2 v5.0 M1329.2 787.7 q1.5 3.0 3 0 M1328.9 786.2 h4.3 M1334.6 788.7 a1.5 1.5 0 1 0 2.5 1 v2.5 M1333.8 786.2 h5.8 M1340.5 787.9 q2.1 4.5 4.2 0 v-1.7 M1340.2 786.2 h4.6 M1349.1 786.2 v5.0 M1345.7 787.7 q1.5 3.0 3 0 M1345.4 786.2 h4.3 M1354.8 786.2 v5.0 M1350.6 787.7 q1.5 3.0 3 0 M1350.3 786.2 h5.1 " stroke="#5f6b75" stroke-width="0.85" fill="none" opacity="0.85"/>
<path d="M1322.3 795.7 v5.0 M1319.0 797.2 q1.5 3.0 3 0 M1318.7 795.7 h4.2 M1323.8 797.4 q1.7 4.5 3.5 0 v-1.7 M1323.5 795.7 h3.9 M1331.3 795.7 v5.0 M1328.3 797.2 q1.5 3.0 3 0 M1328.0 795.7 h3.9 M1337.4 795.7 v5.0 M1332.8 797.2 q1.5 3.0 3 0 M1332.5 795.7 h5.5 M1338.9 797.4 q2.7 4.5 5.4 0 v-1.7 M1338.6 795.7 h5.8 M1349.8 795.7 v5.0 M1345.2 797.2 q1.5 3.0 3 0 M1344.9 795.7 h5.4 M1352.3 796.2 q-2.2 3.5 0.5 4.5 q2 0 1.2 -2.2 M1355.5 795.7 v5.0 M1351.0 795.7 h4.8 " stroke="#5f6b75" stroke-width="0.85" fill="none" opacity="0.85"/>
<text x="1423.0" y="748.3" font-size="12.0" fill="#1a73e8" text-anchor="start" textLength="40.0" lengthAdjust="spacingAndGlyphs" stroke="#fff" stroke-width="2.5" paint-order="stroke" stroke-linejoin="round">Karwan</text>
<text x="1401.7" y="760.3" font-size="12.0" fill="#1a73e8" text-anchor="start" textLength="62.0" lengthAdjust="spacingAndGlyphs" stroke="#fff" stroke-width="2.5" paint-order="stroke" stroke-linejoin="round">Metro Rail S</text>
<path d="M1433.0 765.3 q2.3 4.5 4.6 0 v-1.7 M1432.7 763.6 h5.0 M1439.1 766.1 a1.5 1.5 0 1 0 2.5 1 v2.5 M1438.3 763.6 h4.8 M1444.5 766.1 a1.5 1.5 0 1 0 2.5 1 v2.5 M1443.7 763.6 h4.1 M1452.6 763.6 v5.0 M1448.7 765.1 q1.5 3.0 3 0 M1448.4 763.6 h4.8 M1454.1 765.3 q1.9 4.5 3.8 0 v-1.7 M1453.8 763.6 h4.2 M1459.3 766.1 a1.5 1.5 0 1 0 2.5 1 v2.5 M1458.5 763.6 h4.6 " stroke="#1a73e8" stroke-width="0.85" fill="none" opacity="0.85"/>
<path d="M1432.0 773.1 q-2.2 3.5 0.5 4.5 q2 0 1.2 -2.2 M1434.0 772.6 v5.0 M1430.7 772.6 h3.6 M1435.2 774.3 q2.6 4.5 5.3 0 v-1.7 M1434.9 772.6 h5.7 M1442.5 773.1 q-2.2 3.5 0.5 4.5 q2 0 1.2 -2.2 M1446.4 772.6 v5.0 M1441.2 772.6 h5.5 M1448.1 775.1 a1.5 1.5 0 1 0 2.5 1 v2.5 M1447.3 772.6 h5.0 M1453.3 774.3 q1.9 4.5 3.8 0 v-1.7 M1453.0 772.6 h4.2 M1458.1 774.3 q2.3 4.5 4.6 0 v-1.7 M1457.8 772.6 h5.0 " stroke="#1a73e8" stroke-width="0.85" fill="none" opacity="0.85"/>
<text x="1403.0" y="813.7" font-size="11.5" fill="#45525e" text-anchor="start" textLength="60.0" lengthAdjust="spacingAndGlyphs" font-weight="bold" stroke="#fff" stroke-width="2.5" paint-order="stroke" stroke-linejoin="round">Karwan Baz</text>
<text x="1348.5" y="835.7" font-size="12.0" fill="#e37400" text-anchor="start" textLength="80.0" lengthAdjust="spacingAndGlyphs" stroke="#fff" stroke-width="2.5" paint-order="stroke" stroke-linejoin="round">Coffee Cookers</text>
<text x="1364.0" y="847.3" font-size="12.0" fill="#e37400" text-anchor="start" textLength="64.5" lengthAdjust="spacingAndGlyphs" stroke="#fff" stroke-width="2.5" paint-order="stroke" stroke-linejoin="round">7 Restaurant</text>
<path d="M1394.7 849.9 v5.0 M1391.0 851.4 q1.5 3.0 3 0 M1390.7 849.9 h4.6 M1396.2 851.6 q2.5 4.5 5.0 0 v-1.7 M1395.9 849.9 h5.4 M1402.2 851.6 q2.4 4.5 4.8 0 v-1.7 M1401.9 849.9 h5.2 M1408.0 851.6 q1.8 4.5 3.6 0 v-1.7 M1407.7 849.9 h4.0 M1417.2 849.9 v5.0 M1412.6 851.4 q1.5 3.0 3 0 M1412.3 849.9 h5.5 M1419.7 850.4 q-2.2 3.5 0.5 4.5 q2 0 1.2 -2.2 M1423.1 849.9 v5.0 M1418.4 849.9 h4.9 M1424.3 851.6 q1.9 4.5 3.7 0 v-1.7 M1424.0 849.9 h4.1 " stroke="#e37400" stroke-width="0.85" fill="none" opacity="0.85"/>
<path d="M1382.0 859.2 q-2.2 3.5 0.5 4.5 q2 0 1.2 -2.2 M1385.4 858.7 v5.0 M1380.7 858.7 h5.0 M1391.0 858.7 v5.0 M1386.6 860.2 q1.5 3.0 3 0 M1386.3 858.7 h5.3 M1393.5 859.2 q-2.2 3.5 0.5 4.5 q2 0 1.2 -2.2 M1397.1 858.7 v5.0 M1392.2 858.7 h5.2 M1398.3 860.4 q2.5 4.5 5.0 0 v-1.7 M1398.0 858.7 h5.4 M1404.7 861.2 a1.5 1.5 0 1 0 2.5 1 v2.5 M1403.9 858.7 h5.5 M1411.4 859.2 q-2.2 3.5 0.5 4.5 q2 0 1.2 -2.2 M1415.4 858.7 v5.0 M1410.1 858.7 h5.7 M1417.6 859.2 q-2.2 3.5 0.5 4.5 q2 0 1.2 -2.2 M1421.8 858.7 v5.0 M1416.3 858.7 h5.8 M1423.0 860.4 q1.9 4.5 3.9 0 v-1.7 M1422.7 858.7 h4.3 " stroke="#e37400" stroke-width="0.85" fill="none" opacity="0.85"/>
<path d="M343.5 791.5 a1.5 1.5 0 1 0 2.5 1 v3.7 M342.7 787.8 h4.4 M351.6 787.8 v7.4 M348.0 790.0 q1.5 4.5 3 0 M347.7 787.8 h4.5 M353.1 790.4 q2.2 6.7 4.4 0 v-2.6 M352.8 787.8 h4.8 M359.5 788.3 q-2.2 5.2 0.5 6.7 q2 0 1.2 -2.2 M363.5 787.8 v7.4 M358.2 787.8 h5.7 M367.5 787.8 v7.4 M364.7 790.0 q1.5 4.5 3 0 M364.4 787.8 h3.7 M370.0 788.3 q-2.2 5.2 0.5 6.7 q2 0 1.2 -2.2 M373.9 787.8 v7.4 M368.7 787.8 h5.5 M375.6 791.5 a1.5 1.5 0 1 0 2.5 1 v3.7 M374.8 787.8 h5.1 M381.3 791.5 a1.5 1.5 0 1 0 2.5 1 v3.7 M380.5 787.8 h3.6 M386.1 788.3 q-2.2 5.2 0.5 6.7 q2 0 1.2 -2.2 M390.3 787.8 v7.4 M384.8 787.8 h5.8 M392.0 791.5 a1.5 1.5 0 1 0 2.5 1 v3.7 M391.2 787.8 h3.7 M396.8 788.3 q-2.2 5.2 0.5 6.7 q2 0 1.2 -2.2 M400.3 787.8 v7.4 M395.5 787.8 h5.1 M402.0 791.5 a1.5 1.5 0 1 0 2.5 1 v3.7 M401.2 787.8 h4.3 M406.9 791.5 a1.5 1.5 0 1 0 2.5 1 v3.7 M406.1 787.8 h4.1 M414.6 787.8 v7.4 M411.1 790.0 q1.5 4.5 3 0 M410.8 787.8 h4.4 M421.0 787.8 v7.4 M416.1 790.0 q1.5 4.5 3 0 M415.8 787.8 h5.8 M423.5 788.3 q-2.2 5.2 0.5 6.7 q2 0 1.2 -2.2 M426.4 787.8 v7.4 M422.2 787.8 h4.5 " stroke="#e37400" stroke-width="0.85" fill="none" opacity="0.85"/>
<text x="527.0" y="815.9" font-size="12.0" fill="#5f6b75" text-anchor="start" textLength="94.0" lengthAdjust="spacingAndGlyphs" stroke="#fff" stroke-width="2.5" paint-order="stroke" stroke-linejoin="round">APPLE TOUCH BD</text>
<text x="274.0" y="807.9" font-size="12.0" fill="#5f6b75" text-anchor="start" textLength="18.0" lengthAdjust="spacingAndGlyphs" stroke="#fff" stroke-width="2.5" paint-order="stroke" stroke-linejoin="round">ater</text>
<text x="274.0" y="819.8" font-size="12.0" fill="#5f6b75" text-anchor="start" textLength="25.0" lengthAdjust="spacingAndGlyphs" stroke="#fff" stroke-width="2.5" paint-order="stroke" stroke-linejoin="round">Board</text>
<text x="568.0" y="874.8" font-size="12.0" fill="#5f6b75" text-anchor="start" textLength="120.0" lengthAdjust="spacingAndGlyphs" stroke="#fff" stroke-width="2.5" paint-order="stroke" stroke-linejoin="round">Grameen Phone Center</text>
<text x="755.0" y="875.8" font-size="12.0" fill="#1a73e8" text-anchor="start" textLength="69.0" lengthAdjust="spacingAndGlyphs" stroke="#fff" stroke-width="2.5" paint-order="stroke" stroke-linejoin="round">Mustafa Mart</text>
<g>
<path d="M603.8 664.9 a9.6 9.6 0 1 1 15.2 0 l-7.6 5.3 z" fill="#fff" stroke="#000" stroke-opacity="0.13" stroke-width="1.2" transform="translate(0 0.6)"/>
<path d="M603.8 664.9 a9.6 9.6 0 1 1 15.2 0 l-7.6 5.3 z" fill="#fff"/>
<circle cx="611.4" cy="659.3" r="8.4" fill="#1a8cfa"/>
<path d="M608.2 657.7 h6.4 l0.9 5.2 q0.1 0.8 -0.7 0.8 h-6.8 q-0.8 0 -0.7 -0.8 z" fill="#fff"/>
<path d="M609.5 657.9 v-1 a1.9 1.9 0 0 1 3.8 0 v1" fill="none" stroke="#fff" stroke-width="1.1"/>
</g>
<g>
<path d="M752.7 675.2 a9.6 9.6 0 1 1 15.2 0 l-7.6 5.3 z" fill="#fff" stroke="#000" stroke-opacity="0.13" stroke-width="1.2" transform="translate(0 0.6)"/>
<path d="M752.7 675.2 a9.6 9.6 0 1 1 15.2 0 l-7.6 5.3 z" fill="#fff"/>
<circle cx="760.3" cy="669.6" r="8.4" fill="#1a8cfa"/>
<path d="M757.1 668.0 h6.4 l0.9 5.2 q0.1 0.8 -0.7 0.8 h-6.8 q-0.8 0 -0.7 -0.8 z" fill="#fff"/>
<path d="M758.4 668.2 v-1 a1.9 1.9 0 0 1 3.8 0 v1" fill="none" stroke="#fff" stroke-width="1.1"/>
</g>
<g>
<path d="M727.2 702.6 a9.6 9.6 0 1 1 15.2 0 l-7.6 5.3 z" fill="#fff" stroke="#000" stroke-opacity="0.13" stroke-width="1.2" transform="translate(0 0.6)"/>
<path d="M727.2 702.6 a9.6 9.6 0 1 1 15.2 0 l-7.6 5.3 z" fill="#fff"/>
<circle cx="734.8" cy="697.0" r="8.4" fill="#e53935"/>
<circle cx="734.8" cy="697.0" r="3" fill="none" stroke="#fff" stroke-width="2"/>
</g>
<g>
<path d="M567.4 726.6 a9.6 9.6 0 1 1 15.2 0 l-7.6 5.3 z" fill="#fff" stroke="#000" stroke-opacity="0.13" stroke-width="1.2" transform="translate(0 0.6)"/>
<path d="M567.4 726.6 a9.6 9.6 0 1 1 15.2 0 l-7.6 5.3 z" fill="#fff"/>
<circle cx="575.0" cy="721.0" r="8.4" fill="#1a8cfa"/>
<path d="M571.8 719.4 h6.4 l0.9 5.2 q0.1 0.8 -0.7 0.8 h-6.8 q-0.8 0 -0.7 -0.8 z" fill="#fff"/>
<path d="M573.1 719.6 v-1 a1.9 1.9 0 0 1 3.8 0 v1" fill="none" stroke="#fff" stroke-width="1.1"/>
</g>
<g>
<path d="M756.2 729.9 a9.6 9.6 0 1 1 15.2 0 l-7.6 5.3 z" fill="#fff" stroke="#000" stroke-opacity="0.13" stroke-width="1.2" transform="translate(0 0.6)"/>
<path d="M756.2 729.9 a9.6 9.6 0 1 1 15.2 0 l-7.6 5.3 z" fill="#fff"/>
<circle cx="763.8" cy="724.3" r="8.4" fill="#1a8cfa"/>
<path d="M760.6 722.7 h6.4 l0.9 5.2 q0.1 0.8 -0.7 0.8 h-6.8 q-0.8 0 -0.7 -0.8 z" fill="#fff"/>
<path d="M761.9 722.9 v-1 a1.9 1.9 0 0 1 3.8 0 v1" fill="none" stroke="#fff" stroke-width="1.1"/>
</g>
<g>
<path d="M759.3 758.2 a9.6 9.6 0 1 1 15.2 0 l-7.6 5.3 z" fill="#fff" stroke="#000" stroke-opacity="0.13" stroke-width="1.2" transform="translate(0 0.6)"/>
<path d="M759.3 758.2 a9.6 9.6 0 1 1 15.2 0 l-7.6 5.3 z" fill="#fff"/>
<circle cx="766.9" cy="752.6" r="8.4" fill="#1a8cfa"/>
<path d="M763.7 751.0 h6.4 l0.9 5.2 q0.1 0.8 -0.7 0.8 h-6.8 q-0.8 0 -0.7 -0.8 z" fill="#fff"/>
<path d="M765.0 751.2 v-1 a1.9 1.9 0 0 1 3.8 0 v1" fill="none" stroke="#fff" stroke-width="1.1"/>
</g>
<g>
<path d="M781.1 796.0 a9.6 9.6 0 1 1 15.2 0 l-7.6 5.3 z" fill="#fff" stroke="#000" stroke-opacity="0.13" stroke-width="1.2" transform="translate(0 0.6)"/>
<path d="M781.1 796.0 a9.6 9.6 0 1 1 15.2 0 l-7.6 5.3 z" fill="#fff"/>
<circle cx="788.7" cy="790.4" r="8.4" fill="#1a8cfa"/>
<path d="M785.5 788.8 h6.4 l0.9 5.2 q0.1 0.8 -0.7 0.8 h-6.8 q-0.8 0 -0.7 -0.8 z" fill="#fff"/>
<path d="M786.8 789.0 v-1 a1.9 1.9 0 0 1 3.8 0 v1" fill="none" stroke="#fff" stroke-width="1.1"/>
</g>
<g>
<path d="M875.7 790.0 a9.6 9.6 0 1 1 15.2 0 l-7.6 5.3 z" fill="#fff" stroke="#000" stroke-opacity="0.13" stroke-width="1.2" transform="translate(0 0.6)"/>
<path d="M875.7 790.0 a9.6 9.6 0 1 1 15.2 0 l-7.6 5.3 z" fill="#fff"/>
<circle cx="883.3" cy="784.4" r="8.4" fill="#1a8cfa"/>
<path d="M880.1 782.8 h6.4 l0.9 5.2 q0.1 0.8 -0.7 0.8 h-6.8 q-0.8 0 -0.7 -0.8 z" fill="#fff"/>
<path d="M881.4 783.0 v-1 a1.9 1.9 0 0 1 3.8 0 v1" fill="none" stroke="#fff" stroke-width="1.1"/>
</g>
<g>
<path d="M822.4 821.2 a9.6 9.6 0 1 1 15.2 0 l-7.6 5.3 z" fill="#fff" stroke="#000" stroke-opacity="0.13" stroke-width="1.2" transform="translate(0 0.6)"/>
<path d="M822.4 821.2 a9.6 9.6 0 1 1 15.2 0 l-7.6 5.3 z" fill="#fff"/>
<circle cx="830.0" cy="815.6" r="8.4" fill="#e53935"/>
<rect x="827.0" y="811.6" width="6" height="8" fill="#fff"/><rect x="829.0" y="814.6" width="2" height="1.5" fill="#e53935"/>
</g>
<g>
<path d="M727.9 836.3 a9.6 9.6 0 1 1 15.2 0 l-7.6 5.3 z" fill="#fff" stroke="#000" stroke-opacity="0.13" stroke-width="1.2" transform="translate(0 0.6)"/>
<path d="M727.9 836.3 a9.6 9.6 0 1 1 15.2 0 l-7.6 5.3 z" fill="#fff"/>
<circle cx="735.5" cy="830.7" r="8.4" fill="#1a8cfa"/>
<path d="M732.3 829.1 h6.4 l0.9 5.2 q0.1 0.8 -0.7 0.8 h-6.8 q-0.8 0 -0.7 -0.8 z" fill="#fff"/>
<path d="M733.6 829.3 v-1 a1.9 1.9 0 0 1 3.8 0 v1" fill="none" stroke="#fff" stroke-width="1.1"/>
</g>
<g>
<path d="M835.9 851.2 a9.6 9.6 0 1 1 15.2 0 l-7.6 5.3 z" fill="#fff" stroke="#000" stroke-opacity="0.13" stroke-width="1.2" transform="translate(0 0.6)"/>
<path d="M835.9 851.2 a9.6 9.6 0 1 1 15.2 0 l-7.6 5.3 z" fill="#fff"/>
<circle cx="843.5" cy="845.6" r="8.4" fill="#1a8cfa"/>
<path d="M840.3 844.0 h6.4 l0.9 5.2 q0.1 0.8 -0.7 0.8 h-6.8 q-0.8 0 -0.7 -0.8 z" fill="#fff"/>
<path d="M841.6 844.2 v-1 a1.9 1.9 0 0 1 3.8 0 v1" fill="none" stroke="#fff" stroke-width="1.1"/>
</g>
<g>
<path d="M853.9 711.9 a9.6 9.6 0 1 1 15.2 0 l-7.6 5.3 z" fill="#fff" stroke="#000" stroke-opacity="0.13" stroke-width="1.2" transform="translate(0 0.6)"/>
<path d="M853.9 711.9 a9.6 9.6 0 1 1 15.2 0 l-7.6 5.3 z" fill="#fff"/>
<circle cx="861.5" cy="706.3" r="8.4" fill="#1a8cfa"/>
<path d="M858.3 704.7 h6.4 l0.9 5.2 q0.1 0.8 -0.7 0.8 h-6.8 q-0.8 0 -0.7 -0.8 z" fill="#fff"/>
<path d="M859.6 704.9 v-1 a1.9 1.9 0 0 1 3.8 0 v1" fill="none" stroke="#fff" stroke-width="1.1"/>
</g>
<g>
<path d="M993.4 673.4 a9.6 9.6 0 1 1 15.2 0 l-7.6 5.3 z" fill="#fff" stroke="#000" stroke-opacity="0.13" stroke-width="1.2" transform="translate(0 0.6)"/>
<path d="M993.4 673.4 a9.6 9.6 0 1 1 15.2 0 l-7.6 5.3 z" fill="#fff"/>
<circle cx="1001.0" cy="667.8" r="8.4" fill="#1a8cfa"/>
<path d="M997.8 666.2 h6.4 l0.9 5.2 q0.1 0.8 -0.7 0.8 h-6.8 q-0.8 0 -0.7 -0.8 z" fill="#fff"/>
<path d="M999.1 666.4 v-1 a1.9 1.9 0 0 1 3.8 0 v1" fill="none" stroke="#fff" stroke-width="1.1"/>
</g>
<g>
<path d="M1010.2 762.6 a9.6 9.6 0 1 1 15.2 0 l-7.6 5.3 z" fill="#fff" stroke="#000" stroke-opacity="0.13" stroke-width="1.2" transform="translate(0 0.6)"/>
<path d="M1010.2 762.6 a9.6 9.6 0 1 1 15.2 0 l-7.6 5.3 z" fill="#fff"/>
<circle cx="1017.8" cy="757.0" r="8.4" fill="#6f8291"/>
<circle cx="1017.8" cy="757.0" r="3" fill="#fff"/>
</g>
<g>
<path d="M969.4 718.1 a9.6 9.6 0 1 1 15.2 0 l-7.6 5.3 z" fill="#fff" stroke="#000" stroke-opacity="0.13" stroke-width="1.2" transform="translate(0 0.6)"/>
<path d="M969.4 718.1 a9.6 9.6 0 1 1 15.2 0 l-7.6 5.3 z" fill="#fff"/>
<circle cx="977.0" cy="712.5" r="8.4" fill="#1a8cfa"/>
<path d="M973.8 710.9 h6.4 l0.9 5.2 q0.1 0.8 -0.7 0.8 h-6.8 q-0.8 0 -0.7 -0.8 z" fill="#fff"/>
<path d="M975.1 711.1 v-1 a1.9 1.9 0 0 1 3.8 0 v1" fill="none" stroke="#fff" stroke-width="1.1"/>
</g>
<g>
<path d="M1038.0 681.1 a9.6 9.6 0 1 1 15.2 0 l-7.6 5.3 z" fill="#fff" stroke="#000" stroke-opacity="0.13" stroke-width="1.2" transform="translate(0 0.6)"/>
<path d="M1038.0 681.1 a9.6 9.6 0 1 1 15.2 0 l-7.6 5.3 z" fill="#fff"/>
<circle cx="1045.6" cy="675.5" r="8.4" fill="#f57f17"/>
<path d="M1043.6 671.5 v7 M1042.3 671.5 v3 M1044.9 671.5 v3 M1042.2 674.5 h3 M1047.6 671.5 q2.5 1 1.5 4 v3.5" stroke="#fff" stroke-width="1.3" fill="none"/>
</g>
<g>
<path d="M1131.6 684.6 a9.6 9.6 0 1 1 15.2 0 l-7.6 5.3 z" fill="#fff" stroke="#000" stroke-opacity="0.13" stroke-width="1.2" transform="translate(0 0.6)"/>
<path d="M1131.6 684.6 a9.6 9.6 0 1 1 15.2 0 l-7.6 5.3 z" fill="#fff"/>
<circle cx="1139.2" cy="679.0" r="8.4" fill="#f57f17"/>
<path d="M1137.2 675.0 v7 M1135.9 675.0 v3 M1138.5 675.0 v3 M1135.8 678.0 h3 M1141.2 675.0 q2.5 1 1.5 4 v3.5" stroke="#fff" stroke-width="1.3" fill="none"/>
</g>
<g>
<path d="M1135.7 715.6 a9.6 9.6 0 1 1 15.2 0 l-7.6 5.3 z" fill="#fff" stroke="#000" stroke-opacity="0.13" stroke-width="1.2" transform="translate(0 0.6)"/>
<path d="M1135.7 715.6 a9.6 9.6 0 1 1 15.2 0 l-7.6 5.3 z" fill="#fff"/>
<circle cx="1143.3" cy="710.0" r="8.4" fill="#f57f17"/>
<path d="M1141.3 706.0 v7 M1140.0 706.0 v3 M1142.6 706.0 v3 M1139.9 709.0 h3 M1145.3 706.0 q2.5 1 1.5 4 v3.5" stroke="#fff" stroke-width="1.3" fill="none"/>
</g>
<g>
<path d="M1191.0 703.4 a9.6 9.6 0 1 1 15.2 0 l-7.6 5.3 z" fill="#fff" stroke="#000" stroke-opacity="0.13" stroke-width="1.2" transform="translate(0 0.6)"/>
<path d="M1191.0 703.4 a9.6 9.6 0 1 1 15.2 0 l-7.6 5.3 z" fill="#fff"/>
<circle cx="1198.6" cy="697.8" r="8.4" fill="#e53935"/>
<path d="M1198.6 693.3 l1.3 3 3 0.3 -2.3 2 0.8 3 -2.8 -1.6 -2.8 1.6 0.8 -3 -2.3 -2 3 -0.3z" fill="#fff"/>
</g>
<g>
<path d="M1118.2 758.6 a9.6 9.6 0 1 1 15.2 0 l-7.6 5.3 z" fill="#fff" stroke="#000" stroke-opacity="0.13" stroke-width="1.2" transform="translate(0 0.6)"/>
<path d="M1118.2 758.6 a9.6 9.6 0 1 1 15.2 0 l-7.6 5.3 z" fill="#fff"/>
<circle cx="1125.8" cy="753.0" r="8.4" fill="#f57f17"/>
<path d="M1123.8 749.0 v7 M1122.5 749.0 v3 M1125.1 749.0 v3 M1122.4 752.0 h3 M1127.8 749.0 q2.5 1 1.5 4 v3.5" stroke="#fff" stroke-width="1.3" fill="none"/>
</g>
<g>
<path d="M993.0 821.6 a9.6 9.6 0 1 1 15.2 0 l-7.6 5.3 z" fill="#fff" stroke="#000" stroke-opacity="0.13" stroke-width="1.2" transform="translate(0 0.6)"/>
<path d="M993.0 821.6 a9.6 9.6 0 1 1 15.2 0 l-7.6 5.3 z" fill="#fff"/>
<circle cx="1000.6" cy="816.0" r="8.4" fill="#e53935"/>
<path d="M997.4 814.4 h6.4 l0.9 5.2 q0.1 0.8 -0.7 0.8 h-6.8 q-0.8 0 -0.7 -0.8 z" fill="#fff"/>
<path d="M998.7 814.6 v-1 a1.9 1.9 0 0 1 3.8 0 v1" fill="none" stroke="#fff" stroke-width="1.1"/>
</g>
<g>
<path d="M1365.3 653.3 a9.6 9.6 0 1 1 15.2 0 l-7.6 5.3 z" fill="#fff" stroke="#000" stroke-opacity="0.13" stroke-width="1.2" transform="translate(0 0.6)"/>
<path d="M1365.3 653.3 a9.6 9.6 0 1 1 15.2 0 l-7.6 5.3 z" fill="#fff"/>
<circle cx="1372.9" cy="647.7" r="8.4" fill="#f57f17"/>
<path d="M1370.9 643.7 v7 M1369.6 643.7 v3 M1372.2 643.7 v3 M1369.5 646.7 h3 M1374.9 643.7 q2.5 1 1.5 4 v3.5" stroke="#fff" stroke-width="1.3" fill="none"/>
</g>
<g>
<path d="M1320.8 669.2 a9.6 9.6 0 1 1 15.2 0 l-7.6 5.3 z" fill="#fff" stroke="#000" stroke-opacity="0.13" stroke-width="1.2" transform="translate(0 0.6)"/>
<path d="M1320.8 669.2 a9.6 9.6 0 1 1 15.2 0 l-7.6 5.3 z" fill="#fff"/>
<circle cx="1328.4" cy="663.6" r="8.4" fill="#e53935"/>
<path d="M1325.2 662.0 h6.4 l0.9 5.2 q0.1 0.8 -0.7 0.8 h-6.8 q-0.8 0 -0.7 -0.8 z" fill="#fff"/>
<path d="M1326.5 662.2 v-1 a1.9 1.9 0 0 1 3.8 0 v1" fill="none" stroke="#fff" stroke-width="1.1"/>
</g>
<g>
<path d="M1260.7 680.3 a9.6 9.6 0 1 1 15.2 0 l-7.6 5.3 z" fill="#fff" stroke="#000" stroke-opacity="0.13" stroke-width="1.2" transform="translate(0 0.6)"/>
<path d="M1260.7 680.3 a9.6 9.6 0 1 1 15.2 0 l-7.6 5.3 z" fill="#fff"/>
<circle cx="1268.3" cy="674.7" r="8.4" fill="#6f8291"/>
<circle cx="1268.3" cy="674.7" r="3" fill="#fff"/>
</g>
<g>
<path d="M1332.6 747.1 a9.6 9.6 0 1 1 15.2 0 l-7.6 5.3 z" fill="#fff" stroke="#000" stroke-opacity="0.13" stroke-width="1.2" transform="translate(0 0.6)"/>
<path d="M1332.6 747.1 a9.6 9.6 0 1 1 15.2 0 l-7.6 5.3 z" fill="#fff"/>
<circle cx="1340.2" cy="741.5" r="8.4" fill="#f57f17"/>
<path d="M1338.2 737.5 v7 M1336.9 737.5 v3 M1339.5 737.5 v3 M1336.8 740.5 h3 M1342.2 737.5 q2.5 1 1.5 4 v3.5" stroke="#fff" stroke-width="1.3" fill="none"/>
</g>
<g>
<path d="M1362.7 786.4 a9.6 9.6 0 1 1 15.2 0 l-7.6 5.3 z" fill="#fff" stroke="#000" stroke-opacity="0.13" stroke-width="1.2" transform="translate(0 0.6)"/>
<path d="M1362.7 786.4 a9.6 9.6 0 1 1 15.2 0 l-7.6 5.3 z" fill="#fff"/>
<circle cx="1370.3" cy="780.8" r="8.4" fill="#6f8291"/>
<circle cx="1370.3" cy="780.8" r="3" fill="#fff"/>
</g>
<g>
<path d="M434.7 795.9 a9.6 9.6 0 1 1 15.2 0 l-7.6 5.3 z" fill="#fff" stroke="#000" stroke-opacity="0.13" stroke-width="1.2" transform="translate(0 0.6)"/>
<path d="M434.7 795.9 a9.6 9.6 0 1 1 15.2 0 l-7.6 5.3 z" fill="#fff"/>
<circle cx="442.3" cy="790.3" r="8.4" fill="#f57f17"/>
<path d="M440.3 786.3 v7 M439.0 786.3 v3 M441.6 786.3 v3 M438.9 789.3 h3 M444.3 786.3 q2.5 1 1.5 4 v3.5" stroke="#fff" stroke-width="1.3" fill="none"/>
</g>
<g>
<path d="M506.6 815.6 a9.6 9.6 0 1 1 15.2 0 l-7.6 5.3 z" fill="#fff" stroke="#000" stroke-opacity="0.13" stroke-width="1.2" transform="translate(0 0.6)"/>
<path d="M506.6 815.6 a9.6 9.6 0 1 1 15.2 0 l-7.6 5.3 z" fill="#fff"/>
<circle cx="514.2" cy="810.0" r="8.4" fill="#6f8291"/>
<circle cx="514.2" cy="810.0" r="3" fill="#fff"/>
</g>
<g>
<path d="M273.4 736.6 a9.6 9.6 0 1 1 15.2 0 l-7.6 5.3 z" fill="#fff" stroke="#000" stroke-opacity="0.13" stroke-width="1.2" transform="translate(0 0.6)"/>
<path d="M273.4 736.6 a9.6 9.6 0 1 1 15.2 0 l-7.6 5.3 z" fill="#fff"/>
<circle cx="281.0" cy="731.0" r="8.4" fill="#6f8291"/>
<circle cx="281.0" cy="731.0" r="3" fill="#fff"/>
</g>
<g>
<path d="M547.9 873.6 a9.6 9.6 0 1 1 15.2 0 l-7.6 5.3 z" fill="#fff" stroke="#000" stroke-opacity="0.13" stroke-width="1.2" transform="translate(0 0.6)"/>
<path d="M547.9 873.6 a9.6 9.6 0 1 1 15.2 0 l-7.6 5.3 z" fill="#fff"/>
<circle cx="555.5" cy="868.0" r="8.4" fill="#6f8291"/>
<circle cx="555.5" cy="868.0" r="3" fill="#fff"/>
</g>
<rect x="282" y="652" width="97" height="23" rx="2" fill="#fff" style="filter:drop-shadow(0 1px 1px rgba(0,0,0,.25))"/>
<text x="294.6" y="667.5" font-size="11.0" fill="#1a73e8" text-anchor="start" textLength="72.0" lengthAdjust="spacingAndGlyphs">View larger map</text>
<rect x="283" y="855" width="32" height="16" fill="#fff"/><rect x="284" y="856" width="30" height="14" fill="#8a8580"/><path d="M296 856 l6 14 h5 l-3 -14z" fill="#5b5f66"/>
<circle cx="1436.6" cy="857" r="17" fill="#fff"/>
<path d="M1432 851 l4.6 -4 4.6 4 M1432 863 l4.6 4 4.6 -4 M1430 852.5 l-4 4.5 4 4.5 M1443 852.5 l4 4.5 -4 4.5" stroke="#666" stroke-width="1.6" fill="none"/>
</g></svg>
<div style="position:absolute;left:1513px;top:-10px;width:233px;height:38px;background:#fff;border:1px solid #c3c4c7;box-sizing:border-box;"></div>
<div class="t" style="left:1524.00px;top:-5.51px;font-size:11.00px;line-height:13.20px;color:#3858e9;letter-spacing:0.165px;text-decoration:underline;">+ Add New Category</div>
<div style="position:absolute;left:1513px;top:45px;width:233px;height:272px;background:#fff;border:1px solid #c3c4c7;box-sizing:border-box;"></div>
<div style="position:absolute;left:1514px;top:75px;width:231px;height:1px;background:#c3c4c7;"></div>
<div class="t" style="left:1524.00px;top:53.10px;font-size:13.00px;line-height:15.60px;color:#1d2327;-webkit-text-stroke:0.6px #1d2327;transform:scaleX(0.8861);transform-origin:0 0;">Events Organizer</div>
<svg style="left:1685px;top:55px" width="14" height="10"><path d="M1.5 7L7 1.8L12.5 7" stroke="#787c82" stroke-width="1.6" fill="none"/></svg>
<svg style="left:1707px;top:55px" width="14" height="10"><path d="M1.5 1.8L7 7L12.5 1.8" stroke="#787c82" stroke-width="1.6" fill="none"/></svg>
<svg style="left:1731px;top:56px" width="8" height="6"><path d="M0 5.5L4 0.5L8 5.5z" fill="#787c82"/></svg>
<div style="position:absolute;left:1524px;top:83px;width:106px;height:24px;background:#fff;border:1px solid #dcdcde;border-bottom:none;box-sizing:border-box;"></div>
<div class="t" style="left:1529.70px;top:89.19px;font-size:11.00px;line-height:13.20px;color:#1d2327;letter-spacing:-0.246px;">All Events Organizer</div>
<div class="t" style="left:1638.00px;top:89.19px;font-size:11.00px;line-height:13.20px;color:#3858e9;letter-spacing:-0.072px;">Most Used</div>
<div style="position:absolute;left:1524px;top:106px;width:211px;height:169px;border:1px solid #dcdcde;box-sizing:border-box;background:#fff;"></div>
<div style="position:absolute;left:1529px;top:107px;width:105px;height:1px;background:#fff;"></div>
<div style="position:absolute;left:1535px;top:121.4px;width:13px;height:13px;border:1px solid #8c8f94;border-radius:3px;box-sizing:border-box;background:#fff;"></div>
<div class="t" style="left:1555.00px;top:121.89px;font-size:11.00px;line-height:13.20px;color:#3c434a;letter-spacing:-0.397px;">Best Buy Ltd</div>
<div style="position:absolute;left:1535px;top:140.9px;width:13px;height:13px;border:1px solid #8c8f94;border-radius:3px;box-sizing:border-box;background:#fff;"></div>
<div class="t" style="left:1555.00px;top:141.39px;font-size:11.00px;line-height:13.20px;color:#3c434a;letter-spacing:-0.124px;">Cooking Studio</div>
<div style="position:absolute;left:1535px;top:160.4px;width:13px;height:13px;border:1px solid #8c8f94;border-radius:3px;box-sizing:border-box;background:#fff;"></div>
<div class="t" style="left:1555.00px;top:160.89px;font-size:11.00px;line-height:13.20px;color:#3c434a;letter-spacing:-0.065px;">Doogle Inc</div>
<div style="position:absolute;left:1535px;top:179.9px;width:13px;height:13px;border:1px solid #8c8f94;border-radius:3px;box-sizing:border-box;background:#fff;"></div>
<div class="t" style="left:1555.00px;top:180.39px;font-size:11.00px;line-height:13.20px;color:#3c434a;letter-spacing:-0.461px;">Duperstar LLC</div>
<div style="position:absolute;left:1535px;top:199.4px;width:13px;height:13px;border:1px solid #8c8f94;border-radius:3px;box-sizing:border-box;background:#fff;"></div>
<div class="t" style="left:1555.00px;top:199.89px;font-size:11.00px;line-height:13.20px;color:#3c434a;letter-spacing:-0.139px;">Myamazon Inc</div>
<div style="position:absolute;left:1535px;top:218.9px;width:13px;height:13px;border:1px solid #8c8f94;border-radius:3px;box-sizing:border-box;background:#fff;"></div>
<div class="t" style="left:1555.00px;top:219.39px;font-size:11.00px;line-height:13.20px;color:#3c434a;letter-spacing:-0.142px;">Myceremic Industries Ltd</div>
<div style="position:absolute;left:1535px;top:238.4px;width:13px;height:13px;border:1px solid #8c8f94;border-radius:3px;box-sizing:border-box;background:#fff;"></div>
<svg style="left:1535px;top:238.4px" width="13" height="13"><path d="M2.6 6.6L5.3 9.3L10.6 3.5" stroke="#50575e" stroke-width="1.3" fill="none"/></svg>
<div class="t" style="left:1555.00px;top:238.89px;font-size:11.00px;line-height:13.20px;color:#3c434a;letter-spacing:-0.241px;">MyPeople Inc</div>
<div style="position:absolute;left:1550px;top:257.9px;width:13px;height:13px;border:1px solid #8c8f94;border-radius:3px;box-sizing:border-box;background:#fff;"></div>
<svg style="left:1550px;top:257.9px" width="13" height="13"><path d="M2.6 6.6L5.3 9.3L10.6 3.5" stroke="#50575e" stroke-width="1.3" fill="none"/></svg>
<div class="t" style="left:1570.00px;top:258.39px;font-size:11.00px;line-height:13.20px;color:#3c434a;letter-spacing:-0.336px;">Star Cineplex</div>
<div style="position:absolute;left:1717px;top:107px;width:17px;height:167px;background:#fff;"></div>
<svg style="left:1718px;top:112px" width="14" height="12"><path d="M1 10L6.5 2.5L12 10z" fill="#606060"/></svg>
<div style="position:absolute;left:1720px;top:130px;width:10px;height:103px;background:#8a8a8a;border-radius:5px;"></div>
<svg style="left:1718px;top:258px" width="14" height="12"><path d="M1 1L6.5 8.5L12 1z" fill="#606060"/></svg>
<div class="t" style="left:1524.00px;top:284.99px;font-size:11.00px;line-height:13.20px;color:#3858e9;letter-spacing:0.063px;text-decoration:underline;">+ Add New Organizer</div>
<div style="position:absolute;left:1513px;top:334px;width:233px;height:144px;background:#fff;border:1px solid #c3c4c7;box-sizing:border-box;"></div>
<div style="position:absolute;left:1514px;top:365px;width:231px;height:1px;background:#c3c4c7;"></div>
<div class="t" style="left:1524.00px;top:342.90px;font-size:13.00px;line-height:15.60px;color:#1d2327;-webkit-text-stroke:0.6px #1d2327;transform:scaleX(0.8643);transform-origin:0 0;">Events Tags</div>
<svg style="left:1685px;top:344px" width="14" height="10"><path d="M1.5 7L7 1.8L12.5 7" stroke="#787c82" stroke-width="1.6" fill="none"/></svg>
<svg style="left:1707px;top:344px" width="14" height="10"><path d="M1.5 1.8L7 7L12.5 1.8" stroke="#787c82" stroke-width="1.6" fill="none"/></svg>
<svg style="left:1731px;top:345px" width="8" height="6"><path d="M0 5.5L4 0.5L8 5.5z" fill="#787c82"/></svg>
<div style="position:absolute;left:1524px;top:377px;width:150px;height:25px;background:#fff;border:1px solid #8c8f94;border-radius:4px;box-sizing:border-box;"></div>
<div style="position:absolute;left:1677px;top:377px;width:39px;height:25px;background:#f6f7f7;border:1px solid #3858e9;border-radius:3px;box-sizing:border-box;"></div>
<div class="t" style="left:1687.00px;top:383.69px;font-size:11.00px;line-height:13.20px;color:#3858e9;letter-spacing:-0.287px;">Add</div>
<div class="t" style="left:1524.00px;top:415.19px;font-size:11.00px;line-height:13.20px;color:#50575e;letter-spacing:-0.249px;">Separate Tags with commas</div>
<div class="t" style="left:1524.00px;top:451.69px;font-size:11.00px;line-height:13.20px;color:#3858e9;letter-spacing:-0.130px;text-decoration:underline;">Choose from the most used</div>
<div style="position:absolute;left:1513px;top:494px;width:233px;height:81px;background:#fff;border:1px solid #c3c4c7;box-sizing:border-box;"></div>
<div style="position:absolute;left:1514px;top:525px;width:231px;height:1px;background:#c3c4c7;"></div>
<div class="t" style="left:1524.00px;top:502.90px;font-size:13.00px;line-height:15.60px;color:#1d2327;-webkit-text-stroke:0.6px #1d2327;transform:scaleX(0.8880);transform-origin:0 0;">Events Featured Image</div>
<svg style="left:1685px;top:504px" width="14" height="10"><path d="M1.5 7L7 1.8L12.5 7" stroke="#787c82" stroke-width="1.6" fill="none"/></svg>
<svg style="left:1707px;top:504px" width="14" height="10"><path d="M1.5 1.8L7 7L12.5 1.8" stroke="#787c82" stroke-width="1.6" fill="none"/></svg>
<svg style="left:1731px;top:505px" width="8" height="6"><path d="M0 5.5L4 0.5L8 5.5z" fill="#787c82"/></svg>
<div class="t" style="left:1524.00px;top:539.39px;font-size:11.00px;line-height:13.20px;color:#3858e9;letter-spacing:-0.235px;text-decoration:underline;">Set Events featured image</div>
<div style="position:absolute;left:0px;top:869px;width:1764px;height:26px;background:linear-gradient(90deg,#d7e9cf 0px,#dbecc9 300px,#dcecc3 660px,#dde3d6 760px,#d8ecdc 850px,#e3e2d9 980px,#dde9c8 1060px,#e7e0df 1200px,#e9e0e3 1450px,#e2e6e1 1560px,#dcebe6 1764px);border-top:1px solid #b9bdb6;box-sizing:border-box;"></div>
<svg style="left:0;top:869px" width="1764" height="26" viewBox="0 869 1764 26"><circle cx="14" cy="898" r="13.5" fill="#7b6bd6"/><rect x="6" y="891" width="12" height="6" rx="2" fill="#fff"/><path d="M57 895 q4 -12 16 -11 q8 1 7 8 l-3 3z" fill="#2f8ff0"/><circle cx="80" cy="896" r="5" fill="#b04fd8"/><rect x="109" y="884" width="29" height="12" rx="2" fill="#1f6fc0"/><path d="M117 884 v-3 h13 v3" stroke="#3fb4ef" stroke-width="2" fill="none"/><circle cx="179" cy="898" r="14" fill="#12261a" stroke="#21c45b" stroke-width="1.5"/><path d="M176 887 l-2 6 M184 887 l-2 6" stroke="#2fd06a" stroke-width="1.5"/><circle cx="234" cy="898" r="14" fill="#234050" stroke="#2bc4c9" stroke-width="1.5"/><path d="M226 893 q8 -6 16 0" stroke="#2bd0d0" stroke-width="2" fill="none"/><rect x="274" y="884" width="30" height="14" rx="4" fill="#1b1b1b"/><path d="M277 890 v-3 h3 M301 890 v-3 h-3" stroke="#ff2a2a" stroke-width="1.5" fill="none"/><rect x="280" y="892" width="18" height="6" rx="2" fill="#e02020"/><circle cx="344" cy="898" r="14" fill="#c81010"/><path d="M340 890 h8 M344 886 v8" stroke="#400" stroke-width="2"/><circle cx="398" cy="900" r="13" fill="none" stroke="#1e9e46" stroke-width="3"/><circle cx="410.3" cy="887" r="12.5" fill="#1565d0"/><text x="410.3" y="892" font-size="14" fill="#fff" text-anchor="middle" font-family="Liberation Sans">27</text><rect x="430" y="875" width="48" height="30" rx="5" fill="#e7f1df"/><circle cx="453" cy="898" r="13" fill="#dd3b2c"/><circle cx="455" cy="900" r="6" fill="#1a73e8" stroke="#fff" stroke-width="2"/><circle cx="465" cy="887" r="10" fill="#a36a3a"/><circle cx="463" cy="887" r="6" fill="#5a3a28"/><path d="M468 880 l6 8" stroke="#f39a3a" stroke-width="3"/><path d="M495 895 v-11 h9 l3 3 h15 v8z" fill="#17996a"/><rect x="495" y="888" width="27" height="8" fill="#20b07a"/><rect x="551" y="886" width="26" height="12" rx="3" fill="#2b6fd6"/><circle cx="571" cy="890" r="2.5" fill="#fff"/><rect x="608" y="885" width="22" height="12" rx="1" fill="#58b7e6"/><path d="M611 884 v3 M615 884 v3 M619 884 v3 M623 884 v3 M627 884 v3" stroke="#1a5f8f" stroke-width="1.6"/><rect x="612" y="891" width="14" height="1.5" fill="#1a5f8f"/><circle cx="1292" cy="897" r="12.5" fill="#f5a30c"/><path d="M1522 895 q3 -8 10 -6 M1552 895 q5 -7 12 -4 M1578 895 q3 -6 6 -5 M1596 895 l5 -7 6 0 v7" stroke="#333" stroke-width="1.5" fill="none"/><path d="M1745 895 l8 -8 h9" stroke="#222" stroke-width="3" fill="none"/></svg>
<div class="t" style="left:1316.00px;top:880.95px;font-size:14.00px;line-height:16.80px;color:#1a1a1a;letter-spacing:-0.094px;">30°C</div>
<div class="t" style="left:1675.00px;top:880.95px;font-size:14.00px;line-height:16.80px;color:#1a1a1a;letter-spacing:-0.023px;">1:54 PM</div>
</body></html>
